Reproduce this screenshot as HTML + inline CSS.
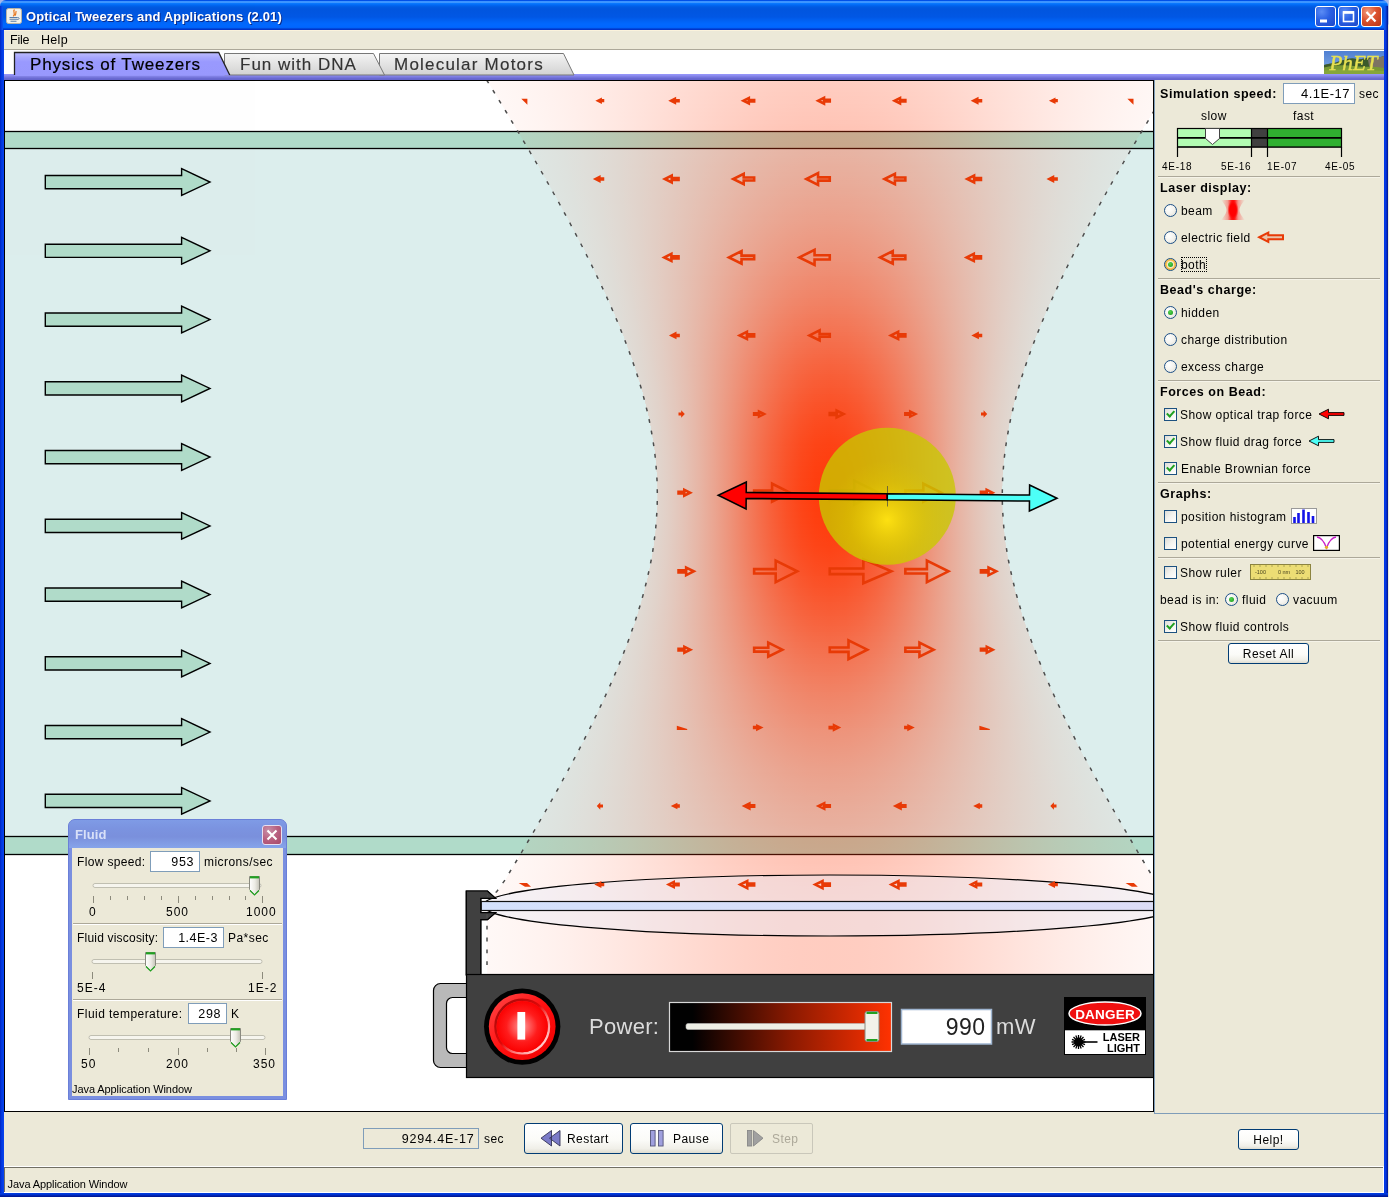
<!DOCTYPE html>
<html><head><meta charset="utf-8"><title>Optical Tweezers and Applications (2.01)</title>
<style>
html,body{margin:0;padding:0;}
body{width:1389px;height:1197px;overflow:hidden;background:#ece9d8;font-family:"Liberation Sans",sans-serif;font-size:12px;color:#000;position:relative;}
.abs{position:absolute;}
.t{position:absolute;white-space:nowrap;line-height:1;}
#frame{position:absolute;left:0;top:0;width:1389px;height:1197px;background:#0831d9;}
#titlebar{position:absolute;left:0;top:0;width:1388px;height:30px;border-radius:6px 6px 0 0;
 background:linear-gradient(to bottom,#0050e8 0px,#0050e8 1px,#3c92ff 1.2px,#3e96ff 2.6px,#0a78ff 3.4px,#0068f4 5px,#005ae2 7px,#0055de 9px,#0057e4 17px,#0062f4 21px,#0068fe 24px,#0066fe 27.4px,#0052e2 28.2px,#0036cc 29.2px,#0032c8 30px);}
#client{position:absolute;left:4px;top:30px;width:1380px;height:1163px;background:#ece9d8;}
#menubar{position:absolute;left:4px;top:30px;width:1380px;height:19px;background:#ece9d8;}
#tabstrip{position:absolute;left:4px;top:50px;width:1380px;height:25px;background:#fff;}
#tabline{position:absolute;left:4px;top:74px;width:1380px;height:6px;background:linear-gradient(to bottom,#9898fc 0%,#8c8cf0 25%,#7a7ae0 50%,#6a6ad2 75%,#6464cc 100%);}
.sep{position:absolute;left:1158px;width:222px;height:1px;background:#aca899;border-bottom:1px solid #f5f3e8;}
.rb{position:absolute;width:11px;height:11px;border-radius:50%;border:1px solid #1c4f87;background:radial-gradient(circle at 35% 35%,#fff 0%,#f4f3ee 50%,#dcdcd2 100%);}
.rb.on::after{content:"";position:absolute;left:3px;top:3px;width:5px;height:5px;border-radius:50%;background:radial-gradient(circle at 40% 35%,#55d551 0%,#21a121 80%);}
.cb{position:absolute;width:11px;height:11px;border:1px solid #1c5180;background:linear-gradient(135deg,#dcdcd7 0%,#f3f3ef 50%,#fff 100%);}
.lbl{position:absolute;white-space:nowrap;font-size:12px;line-height:14px;letter-spacing:0.45px;margin-top:1px;}
.hdr{position:absolute;white-space:nowrap;font-size:12.5px;font-weight:bold;line-height:14px;letter-spacing:0.55px;margin-top:1px;}
.btn{position:absolute;box-sizing:border-box;border:1px solid #003c74;border-radius:3px;background:linear-gradient(to bottom,#fff 0%,#fbfbf8 55%,#f0efe8 85%,#dedcd0 100%);font-size:12px;text-align:center;}
.tf{position:absolute;box-sizing:border-box;border:1px solid #7f9db9;background:#fff;text-align:right;font-size:12px;}
</style></head><body>
<div id="root" style="position:absolute;left:0;top:0;width:1389px;height:1197px;will-change:transform;opacity:0.999">
<div id="frame"></div>
<div class="abs" style="left:1384px;top:0;width:4px;height:1197px;background:linear-gradient(to right,#0038e8 0%,#0638e0 45%,#0024b4 75%,#001488 100%)"></div>
<div class="abs" style="left:0;top:0;width:4px;height:1197px;background:linear-gradient(to right,#0024c0 0%,#0038e0 40%,#0a44f0 100%)"></div>
<div class="abs" style="left:0;top:1193px;width:1388px;height:4px;background:linear-gradient(to bottom,#0040e4 0%,#0034d4 35%,#0020a8 70%,#00148c 100%)"></div>
<div class="abs" style="left:0;top:0;width:8px;height:8px;background:#a2b6ea"></div><div class="abs" style="left:1380px;top:0;width:9px;height:8px;background:#a2b6ea"></div>
<div id="titlebar"></div>
<div id="client"></div>
<div class="abs" style="left:1388px;top:0;width:1px;height:1197px;background:linear-gradient(to bottom,#b4c4ee 0px,#b4c4ee 24px,#ece9d8 25px,#ece9d8 100%)"></div>
<!-- title bar -->
<svg class="abs" style="left:6px;top:8px" width="16" height="16" viewBox="0 0 16 16"><rect x="0.5" y="0.5" width="15" height="15" rx="2" fill="#f4f2ea" stroke="#b9b5a6"/><path d="M8.5,1.5 C6,4 10.5,5 7.2,8.3 M10.3,3.2 C9.2,4.8 10.6,5.6 9,7.6" stroke="#e8761c" stroke-width="1.2" fill="none"/><path d="M3.5,9.5 H11.5 M3.5,11.3 H11.5 M4.5,13.2 H10.5" stroke="#5a7ea8" stroke-width="1.1"/><path d="M11.5,9.5 C13.8,9.3 13.5,11.6 11.3,11.6" stroke="#5a7ea8" stroke-width="1" fill="none"/></svg>
<div class="t" id="ttl" style="left:26px;top:10px;font-size:13px;font-weight:bold;color:#fff;text-shadow:1px 1px 0 #0a2a8a;letter-spacing:0.13px">Optical Tweezers and Applications (2.01)</div>
<div class="abs" style="left:1384px;top:6px;width:4px;height:24px;background:linear-gradient(to right,#0a5cf0 0%,#0848e0 45%,#0028b8 75%,#001488 100%)"></div>
<div class="abs" style="left:0;top:6px;width:3px;height:24px;background:linear-gradient(to right,#0030c8 0%,#0848e8 60%,#0858f0 100%)"></div>
<!-- window buttons -->
<div class="abs wb" style="left:1315px;top:6px;"></div>
<div class="abs wb" style="left:1338px;top:6px;"></div>
<div class="abs wb wc" style="left:1361px;top:6px;"></div>
<svg class="abs" style="left:1315px;top:6px" width="70" height="22" viewBox="0 0 70 22"><rect x="5" y="13.5" width="7" height="3" fill="#fff"/><rect x="28.5" y="6" width="10" height="9.5" fill="none" stroke="#fff" stroke-width="1.6"/><rect x="28" y="5.2" width="11" height="2.6" fill="#fff"/><path d="M51.5,6 L60.5,15.5 M60.5,6 L51.5,15.5" stroke="#fff" stroke-width="2.3" stroke-linecap="butt"/></svg>
<!-- menu -->
<div id="menubar"></div>
<div class="abs" style="left:4px;top:30px;width:1380px;height:1px;background:#fbf3dc"></div>
<div class="abs" style="left:4px;top:49px;width:1380px;height:1px;background:#aca899"></div>
<div class="t" style="left:10px;top:34px;font-size:12.5px;letter-spacing:-0.25px">File</div>
<div class="t" style="left:41px;top:34px;font-size:12.5px;letter-spacing:0.3px">Help</div>
<!-- tabs -->
<div id="tabstrip"></div>
<div id="tabline"></div>
<svg class="abs" style="left:4px;top:50px" width="1380" height="30" viewBox="4 50 1380 30">
<defs><linearGradient id="tg" x1="0" y1="0" x2="0" y2="1"><stop offset="0" stop-color="#f4f4f4"/><stop offset="1" stop-color="#d2d2d2"/></linearGradient>
<linearGradient id="tsel" x1="0" y1="0" x2="0" y2="1"><stop offset="0" stop-color="#bebeff"/><stop offset="0.2" stop-color="#a8a8ff"/><stop offset="0.4" stop-color="#9999ff"/><stop offset="1" stop-color="#9898fe"/></linearGradient></defs>
<path d="M379.5,75 L379.5,53.5 L563.5,53.5 L574,75 Z" fill="url(#tg)" stroke="#777" stroke-width="1"/>
<path d="M224.5,75 L224.5,53.5 L373.5,53.5 L384.5,75 Z" fill="url(#tg)" stroke="#777" stroke-width="1"/>
<path d="M14.5,76 L14.5,52.5 L219,52.5 L230,75.5 Z" fill="url(#tsel)" stroke="none"/>
<path d="M14.5,75 L14.5,52.5 L218.7,52.5 L229.7,75" fill="none" stroke="#222" stroke-width="1.3"/>
</svg>
<div class="t" style="left:30px;top:56px;font-size:17px;letter-spacing:0.86px;-webkit-text-stroke:0.2px #000">Physics of Tweezers</div>
<div class="t" style="left:240px;top:56px;font-size:17px;letter-spacing:1.0px;color:#333;-webkit-text-stroke:0.15px #333">Fun with DNA</div>
<div class="t" style="left:394px;top:56px;font-size:17px;letter-spacing:1.22px;color:#333;-webkit-text-stroke:0.15px #333">Molecular Motors</div>
<!-- PhET logo -->
<svg class="abs" style="left:1324px;top:51px" width="60" height="23" viewBox="0 0 60 23">
<defs><linearGradient id="sky" x1="0" y1="0" x2="0" y2="1"><stop offset="0" stop-color="#4f7fd2"/><stop offset="1" stop-color="#86aee6"/></linearGradient></defs>
<rect width="60" height="23" fill="url(#sky)"/>
<path d="M0,14 C6,12 10,12.500 16,10 C22,8.500 27,6 33,8 C38,9.500 42,5 47,7 C52,8.500 56,6 60,5 V23 H0 Z" fill="#3c5a2a"/>
<path d="M44,9 C48,5 53,8 60,5 V20 H46 Z" fill="#7d7462"/>
<path d="M0,16.500 C10,14 20,13.500 30,15 C40,16.500 50,15 60,17 V23 H0 Z" fill="#7a9a34"/>
<path d="M0,19.500 C15,17.500 35,18.500 60,20 V23 H0 Z" fill="#86a63a"/>
<text x="5.500" y="19.200" font-family="Liberation Serif" font-style="italic" font-size="21.500" fill="#e6e052" stroke="#e6e052" stroke-width="0.45" textLength="48" lengthAdjust="spacingAndGlyphs">PhET</text>
</svg>
<style>
.wb{width:21px;height:21px;box-sizing:border-box;border:1px solid #fff;border-radius:3px;background:radial-gradient(circle at 30% 25%,#5b8cf5 0%,#2a5fe3 45%,#1c46c8 100%);}
.wb.wc{background:radial-gradient(circle at 30% 25%,#f09a7c 0%,#dc5230 45%,#b93414 100%);}
</style>
<svg class="abs" style="left:4px;top:80px" width="1150" height="1032" viewBox="4 80 1150 1032">
<defs>
<linearGradient id="gb" x1="0" y1="0" x2="1" y2="0"><stop offset="0.0000" stop-color="#ff3b0b" stop-opacity="0.1353"/><stop offset="0.0417" stop-color="#ff3b0b" stop-opacity="0.1863"/><stop offset="0.0833" stop-color="#ff3b0b" stop-opacity="0.2494"/><stop offset="0.1250" stop-color="#ff3b0b" stop-opacity="0.3247"/><stop offset="0.1667" stop-color="#ff3b0b" stop-opacity="0.4111"/><stop offset="0.2083" stop-color="#ff3b0b" stop-opacity="0.5063"/><stop offset="0.2500" stop-color="#ff3b0b" stop-opacity="0.6065"/><stop offset="0.2917" stop-color="#ff3b0b" stop-opacity="0.7066"/><stop offset="0.3333" stop-color="#ff3b0b" stop-opacity="0.8007"/><stop offset="0.3750" stop-color="#ff3b0b" stop-opacity="0.8825"/><stop offset="0.4167" stop-color="#ff3b0b" stop-opacity="0.9460"/><stop offset="0.4583" stop-color="#ff3b0b" stop-opacity="0.9862"/><stop offset="0.5000" stop-color="#ff3b0b" stop-opacity="1.0000"/><stop offset="0.5417" stop-color="#ff3b0b" stop-opacity="0.9862"/><stop offset="0.5833" stop-color="#ff3b0b" stop-opacity="0.9460"/><stop offset="0.6250" stop-color="#ff3b0b" stop-opacity="0.8825"/><stop offset="0.6667" stop-color="#ff3b0b" stop-opacity="0.8007"/><stop offset="0.7083" stop-color="#ff3b0b" stop-opacity="0.7066"/><stop offset="0.7500" stop-color="#ff3b0b" stop-opacity="0.6065"/><stop offset="0.7917" stop-color="#ff3b0b" stop-opacity="0.5063"/><stop offset="0.8333" stop-color="#ff3b0b" stop-opacity="0.4111"/><stop offset="0.8750" stop-color="#ff3b0b" stop-opacity="0.3247"/><stop offset="0.9167" stop-color="#ff3b0b" stop-opacity="0.2494"/><stop offset="0.9583" stop-color="#ff3b0b" stop-opacity="0.1863"/><stop offset="1.0000" stop-color="#ff3b0b" stop-opacity="0.1353"/></linearGradient>
<clipPath id="beamclip"><path d="M486.6,80.0 L489.1,84.0 L491.6,88.0 L494.0,92.0 L496.5,96.0 L498.9,100.0 L501.3,104.0 L503.8,108.0 L506.2,112.0 L508.6,116.0 L511.0,120.0 L513.4,124.0 L515.8,128.0 L518.2,132.0 L520.6,136.0 L522.9,140.0 L525.3,144.0 L527.7,148.0 L530.0,152.0 L532.3,156.0 L534.7,160.0 L537.0,164.0 L539.3,168.0 L541.6,172.0 L543.9,176.0 L546.1,180.0 L548.4,184.0 L550.7,188.0 L552.9,192.0 L555.1,196.0 L557.3,200.0 L559.6,204.0 L561.7,208.0 L563.9,212.0 L566.1,216.0 L568.3,220.0 L570.4,224.0 L572.5,228.0 L574.6,232.0 L576.7,236.0 L578.8,240.0 L580.9,244.0 L583.0,248.0 L585.0,252.0 L587.0,256.0 L589.0,260.0 L591.0,264.0 L593.0,268.0 L594.9,272.0 L596.8,276.0 L598.8,280.0 L600.7,284.0 L602.5,288.0 L604.4,292.0 L606.2,296.0 L608.0,300.0 L609.8,304.0 L611.6,308.0 L613.3,312.0 L615.0,316.0 L616.7,320.0 L618.4,324.0 L620.0,328.0 L621.6,332.0 L623.2,336.0 L624.8,340.0 L626.3,344.0 L627.8,348.0 L629.3,352.0 L630.7,356.0 L632.1,360.0 L633.5,364.0 L634.9,368.0 L636.2,372.0 L637.5,376.0 L638.7,380.0 L639.9,384.0 L641.1,388.0 L642.2,392.0 L643.3,396.0 L644.4,400.0 L645.4,404.0 L646.4,408.0 L647.4,412.0 L648.3,416.0 L649.2,420.0 L650.0,424.0 L650.8,428.0 L651.5,432.0 L652.2,436.0 L652.9,440.0 L653.5,444.0 L654.1,448.0 L654.6,452.0 L655.1,456.0 L655.5,460.0 L655.9,464.0 L656.2,468.0 L656.5,472.0 L656.8,476.0 L657.0,480.0 L657.1,484.0 L657.2,488.0 L657.3,492.0 L657.3,496.0 L657.3,500.0 L657.2,504.0 L657.0,508.0 L656.9,512.0 L656.6,516.0 L656.4,520.0 L656.1,524.0 L655.7,528.0 L655.3,532.0 L654.8,536.0 L654.3,540.0 L653.8,544.0 L653.2,548.0 L652.6,552.0 L651.9,556.0 L651.2,560.0 L650.4,564.0 L649.6,568.0 L648.7,572.0 L647.8,576.0 L646.9,580.0 L645.9,584.0 L644.9,588.0 L643.9,592.0 L642.8,596.0 L641.7,600.0 L640.5,604.0 L639.3,608.0 L638.1,612.0 L636.8,616.0 L635.5,620.0 L634.2,624.0 L632.8,628.0 L631.4,632.0 L630.0,636.0 L628.6,640.0 L627.1,644.0 L625.5,648.0 L624.0,652.0 L622.4,656.0 L620.8,660.0 L619.2,664.0 L617.5,668.0 L615.9,672.0 L614.2,676.0 L612.4,680.0 L610.7,684.0 L608.9,688.0 L607.1,692.0 L605.3,696.0 L603.5,700.0 L601.6,704.0 L599.7,708.0 L597.8,712.0 L595.9,716.0 L593.9,720.0 L592.0,724.0 L590.0,728.0 L588.0,732.0 L586.0,736.0 L584.0,740.0 L581.9,744.0 L579.9,748.0 L577.8,752.0 L575.7,756.0 L573.6,760.0 L571.5,764.0 L569.3,768.0 L567.2,772.0 L565.0,776.0 L562.8,780.0 L560.7,784.0 L558.5,788.0 L556.2,792.0 L554.0,796.0 L551.8,800.0 L549.5,804.0 L547.3,808.0 L545.0,812.0 L542.7,816.0 L540.4,820.0 L538.1,824.0 L535.8,828.0 L533.5,832.0 L531.2,836.0 L528.8,840.0 L526.5,844.0 L524.1,848.0 L521.8,852.0 L519.4,856.0 L517.0,860.0 L514.6,864.0 L512.2,868.0 L509.8,872.0 L507.4,876.0 L505.0,880.0 L502.1,884.0 L499.3,888.0 L496.5,892.0 L493.6,896.0 L490.7,900.0 L487.9,904.0 L486.8,908.0 L486.8,912.0 L486.8,916.0 L486.8,920.0 L486.8,924.0 L486.8,928.0 L486.8,932.0 L486.8,936.0 L486.8,940.0 L486.8,944.0 L486.8,948.0 L486.8,952.0 L486.8,956.0 L486.8,960.0 L486.8,964.0 L486.8,968.0 L486.8,972.0 L486.8,974.0 L1172.8,974.0 L1172.8,972.0 L1172.8,968.0 L1172.8,964.0 L1172.8,960.0 L1172.8,956.0 L1172.8,952.0 L1172.8,948.0 L1172.8,944.0 L1172.8,940.0 L1172.8,936.0 L1172.8,932.0 L1172.8,928.0 L1172.8,924.0 L1172.8,920.0 L1172.8,916.0 L1172.8,912.0 L1172.8,908.0 L1171.7,904.0 L1168.9,900.0 L1166.0,896.0 L1163.1,892.0 L1160.3,888.0 L1157.5,884.0 L1154.6,880.0 L1152.2,876.0 L1149.8,872.0 L1147.4,868.0 L1145.0,864.0 L1142.6,860.0 L1140.2,856.0 L1137.8,852.0 L1135.5,848.0 L1133.1,844.0 L1130.8,840.0 L1128.4,836.0 L1126.1,832.0 L1123.8,828.0 L1121.5,824.0 L1119.2,820.0 L1116.9,816.0 L1114.6,812.0 L1112.3,808.0 L1110.1,804.0 L1107.8,800.0 L1105.6,796.0 L1103.4,792.0 L1101.1,788.0 L1098.9,784.0 L1096.8,780.0 L1094.6,776.0 L1092.4,772.0 L1090.3,768.0 L1088.1,764.0 L1086.0,760.0 L1083.9,756.0 L1081.8,752.0 L1079.7,748.0 L1077.7,744.0 L1075.6,740.0 L1073.6,736.0 L1071.6,732.0 L1069.6,728.0 L1067.6,724.0 L1065.7,720.0 L1063.7,716.0 L1061.8,712.0 L1059.9,708.0 L1058.0,704.0 L1056.1,700.0 L1054.3,696.0 L1052.5,692.0 L1050.7,688.0 L1048.9,684.0 L1047.2,680.0 L1045.4,676.0 L1043.7,672.0 L1042.1,668.0 L1040.4,664.0 L1038.8,660.0 L1037.2,656.0 L1035.6,652.0 L1034.1,648.0 L1032.5,644.0 L1031.0,640.0 L1029.6,636.0 L1028.2,632.0 L1026.8,628.0 L1025.4,624.0 L1024.1,620.0 L1022.8,616.0 L1021.5,612.0 L1020.3,608.0 L1019.1,604.0 L1017.9,600.0 L1016.8,596.0 L1015.7,592.0 L1014.7,588.0 L1013.7,584.0 L1012.7,580.0 L1011.8,576.0 L1010.9,572.0 L1010.0,568.0 L1009.2,564.0 L1008.4,560.0 L1007.7,556.0 L1007.0,552.0 L1006.4,548.0 L1005.8,544.0 L1005.3,540.0 L1004.8,536.0 L1004.3,532.0 L1003.9,528.0 L1003.5,524.0 L1003.2,520.0 L1003.0,516.0 L1002.7,512.0 L1002.6,508.0 L1002.4,504.0 L1002.3,500.0 L1002.3,496.0 L1002.3,492.0 L1002.4,488.0 L1002.5,484.0 L1002.6,480.0 L1002.8,476.0 L1003.1,472.0 L1003.4,468.0 L1003.7,464.0 L1004.1,460.0 L1004.5,456.0 L1005.0,452.0 L1005.5,448.0 L1006.1,444.0 L1006.7,440.0 L1007.4,436.0 L1008.1,432.0 L1008.8,428.0 L1009.6,424.0 L1010.4,420.0 L1011.3,416.0 L1012.2,412.0 L1013.2,408.0 L1014.2,404.0 L1015.2,400.0 L1016.3,396.0 L1017.4,392.0 L1018.5,388.0 L1019.7,384.0 L1020.9,380.0 L1022.1,376.0 L1023.4,372.0 L1024.7,368.0 L1026.1,364.0 L1027.5,360.0 L1028.9,356.0 L1030.3,352.0 L1031.8,348.0 L1033.3,344.0 L1034.8,340.0 L1036.4,336.0 L1038.0,332.0 L1039.6,328.0 L1041.2,324.0 L1042.9,320.0 L1044.6,316.0 L1046.3,312.0 L1048.0,308.0 L1049.8,304.0 L1051.6,300.0 L1053.4,296.0 L1055.2,292.0 L1057.1,288.0 L1058.9,284.0 L1060.8,280.0 L1062.8,276.0 L1064.7,272.0 L1066.6,268.0 L1068.6,264.0 L1070.6,260.0 L1072.6,256.0 L1074.6,252.0 L1076.6,248.0 L1078.7,244.0 L1080.8,240.0 L1082.9,236.0 L1085.0,232.0 L1087.1,228.0 L1089.2,224.0 L1091.3,220.0 L1093.5,216.0 L1095.7,212.0 L1097.9,208.0 L1100.0,204.0 L1102.3,200.0 L1104.5,196.0 L1106.7,192.0 L1108.9,188.0 L1111.2,184.0 L1113.5,180.0 L1115.7,176.0 L1118.0,172.0 L1120.3,168.0 L1122.6,164.0 L1124.9,160.0 L1127.3,156.0 L1129.6,152.0 L1131.9,148.0 L1134.3,144.0 L1136.7,140.0 L1139.0,136.0 L1141.4,132.0 L1143.8,128.0 L1146.2,124.0 L1148.6,120.0 L1151.0,116.0 L1153.4,112.0 L1155.8,108.0 L1158.3,104.0 L1160.7,100.0 L1163.1,96.0 L1165.6,92.0 L1168.0,88.0 L1170.5,84.0 L1173.0,80.0Z"/></clipPath>
<clipPath id="cv"><rect x="5" y="81" width="1148" height="1030"/></clipPath>
<radialGradient id="beadhl" cx="887.3" cy="520" r="60" gradientUnits="userSpaceOnUse"><stop offset="0" stop-color="#ffe312" stop-opacity="0.95"/><stop offset="0.3" stop-color="#f6da0c" stop-opacity="0.6"/><stop offset="0.65" stop-color="#ead400" stop-opacity="0.22"/><stop offset="1" stop-color="#e0d000" stop-opacity="0"/></radialGradient>
<radialGradient id="btn" cx="521.5" cy="1026.8" r="34" gradientUnits="userSpaceOnUse"><stop offset="0" stop-color="#ff6a6a"/><stop offset="0.45" stop-color="#ff1010"/><stop offset="0.74" stop-color="#f00000"/><stop offset="0.80" stop-color="#ff5050"/><stop offset="0.86" stop-color="#e80000"/><stop offset="1" stop-color="#d00000"/></radialGradient>
<linearGradient id="pw" x1="0" y1="0" x2="1" y2="0"><stop offset="0" stop-color="#000"/><stop offset="0.1" stop-color="#000"/><stop offset="0.55" stop-color="#8c1a00"/><stop offset="1" stop-color="#ff3200"/></linearGradient>
<linearGradient id="lensg" x1="0" y1="0" x2="1" y2="0"><stop offset="0" stop-color="#c9d9fb"/><stop offset="1" stop-color="#d4d4f4"/></linearGradient>
</defs>
<rect x="4" y="80" width="1150" height="1032" fill="#000"/>
<rect x="5" y="81" width="1148" height="1030" fill="#fff"/>
<g clip-path="url(#cv)">
<rect x="5" y="148" width="1148" height="689" fill="#dceeed"/>
<rect x="3.5" y="131.5" width="1152" height="17" fill="#b0dbc9" stroke="#000" stroke-width="1.3"/>
<rect x="3.5" y="836.5" width="1152" height="18" fill="#b0dbc9" stroke="#000" stroke-width="1.3"/>
<path d="M45.3,175.5 H181.6 V168.7 L210.0,182.1 L181.6,195.5 V188.7 H45.3Z" fill="#b0dbc9" stroke="#000" stroke-width="1.4" stroke-linejoin="miter"/>
<path d="M45.3,244.2 H181.6 V237.4 L210.0,250.8 L181.6,264.2 V257.4 H45.3Z" fill="#b0dbc9" stroke="#000" stroke-width="1.4" stroke-linejoin="miter"/>
<path d="M45.3,313.0 H181.6 V306.2 L210.0,319.6 L181.6,333.0 V326.2 H45.3Z" fill="#b0dbc9" stroke="#000" stroke-width="1.4" stroke-linejoin="miter"/>
<path d="M45.3,381.8 H181.6 V375.0 L210.0,388.4 L181.6,401.8 V395.0 H45.3Z" fill="#b0dbc9" stroke="#000" stroke-width="1.4" stroke-linejoin="miter"/>
<path d="M45.3,450.5 H181.6 V443.7 L210.0,457.1 L181.6,470.5 V463.7 H45.3Z" fill="#b0dbc9" stroke="#000" stroke-width="1.4" stroke-linejoin="miter"/>
<path d="M45.3,519.2 H181.6 V512.5 L210.0,525.9 L181.6,539.2 V532.5 H45.3Z" fill="#b0dbc9" stroke="#000" stroke-width="1.4" stroke-linejoin="miter"/>
<path d="M45.3,588.0 H181.6 V581.2 L210.0,594.6 L181.6,608.0 V601.2 H45.3Z" fill="#b0dbc9" stroke="#000" stroke-width="1.4" stroke-linejoin="miter"/>
<path d="M45.3,656.8 H181.6 V650.0 L210.0,663.4 L181.6,676.8 V670.0 H45.3Z" fill="#b0dbc9" stroke="#000" stroke-width="1.4" stroke-linejoin="miter"/>
<path d="M45.3,725.5 H181.6 V718.7 L210.0,732.1 L181.6,745.5 V738.7 H45.3Z" fill="#b0dbc9" stroke="#000" stroke-width="1.4" stroke-linejoin="miter"/>
<path d="M45.3,794.2 H181.6 V787.5 L210.0,800.9 L181.6,814.2 V807.5 H45.3Z" fill="#b0dbc9" stroke="#000" stroke-width="1.4" stroke-linejoin="miter"/>
<rect x="433.5" y="983.5" width="60" height="84" rx="7" ry="7" fill="#b9b9b9" stroke="#000" stroke-width="1.2"/>
<rect x="446.5" y="997.5" width="40" height="56" rx="6" ry="6" fill="#fff" stroke="#000" stroke-width="1.2"/>
<path d="M466.3,891 L487.5,891 L495.6,898.3 L480.8,898.3 L480.8,912.6 L495.6,912.6 L487.5,919.6 L480.8,919.6 L480.8,975 L466.3,975 Z" fill="#404040" stroke="#000" stroke-width="1.2"/>
<g clip-path="url(#beamclip)" shape-rendering="crispEdges">
<rect x="487.2" y="80" width="685.1" height="2" fill="url(#gb)" fill-opacity="0.254"/>
<rect x="488.5" y="82" width="682.7" height="2" fill="url(#gb)" fill-opacity="0.255"/>
<rect x="489.7" y="84" width="680.2" height="2" fill="url(#gb)" fill-opacity="0.257"/>
<rect x="490.9" y="86" width="677.7" height="2" fill="url(#gb)" fill-opacity="0.259"/>
<rect x="492.2" y="88" width="675.3" height="2" fill="url(#gb)" fill-opacity="0.261"/>
<rect x="493.4" y="90" width="672.8" height="2" fill="url(#gb)" fill-opacity="0.263"/>
<rect x="494.6" y="92" width="670.4" height="2" fill="url(#gb)" fill-opacity="0.265"/>
<rect x="495.8" y="94" width="667.9" height="2" fill="url(#gb)" fill-opacity="0.267"/>
<rect x="497.1" y="96" width="665.5" height="2" fill="url(#gb)" fill-opacity="0.269"/>
<rect x="498.3" y="98" width="663.0" height="2" fill="url(#gb)" fill-opacity="0.271"/>
<rect x="499.5" y="100" width="660.6" height="2" fill="url(#gb)" fill-opacity="0.273"/>
<rect x="500.7" y="102" width="658.1" height="2" fill="url(#gb)" fill-opacity="0.275"/>
<rect x="501.9" y="104" width="655.7" height="2" fill="url(#gb)" fill-opacity="0.277"/>
<rect x="503.2" y="106" width="653.3" height="2" fill="url(#gb)" fill-opacity="0.279"/>
<rect x="504.4" y="108" width="650.8" height="2" fill="url(#gb)" fill-opacity="0.281"/>
<rect x="505.6" y="110" width="648.4" height="2" fill="url(#gb)" fill-opacity="0.283"/>
<rect x="506.8" y="112" width="646.0" height="2" fill="url(#gb)" fill-opacity="0.285"/>
<rect x="508.0" y="114" width="643.6" height="2" fill="url(#gb)" fill-opacity="0.287"/>
<rect x="509.2" y="116" width="641.2" height="2" fill="url(#gb)" fill-opacity="0.290"/>
<rect x="510.4" y="118" width="638.8" height="2" fill="url(#gb)" fill-opacity="0.292"/>
<rect x="511.6" y="120" width="636.4" height="2" fill="url(#gb)" fill-opacity="0.294"/>
<rect x="512.8" y="122" width="634.0" height="2" fill="url(#gb)" fill-opacity="0.296"/>
<rect x="514.0" y="124" width="631.6" height="2" fill="url(#gb)" fill-opacity="0.298"/>
<rect x="515.2" y="126" width="629.2" height="2" fill="url(#gb)" fill-opacity="0.301"/>
<rect x="516.4" y="128" width="626.8" height="2" fill="url(#gb)" fill-opacity="0.303"/>
<rect x="517.6" y="130" width="624.4" height="2" fill="url(#gb)" fill-opacity="0.305"/>
<rect x="518.8" y="132" width="622.0" height="2" fill="url(#gb)" fill-opacity="0.308"/>
<rect x="520.0" y="134" width="619.6" height="2" fill="url(#gb)" fill-opacity="0.310"/>
<rect x="521.2" y="136" width="617.3" height="2" fill="url(#gb)" fill-opacity="0.312"/>
<rect x="522.4" y="138" width="614.9" height="2" fill="url(#gb)" fill-opacity="0.315"/>
<rect x="523.5" y="140" width="612.5" height="2" fill="url(#gb)" fill-opacity="0.317"/>
<rect x="524.7" y="142" width="610.2" height="2" fill="url(#gb)" fill-opacity="0.320"/>
<rect x="525.9" y="144" width="607.8" height="2" fill="url(#gb)" fill-opacity="0.322"/>
<rect x="527.1" y="146" width="605.5" height="2" fill="url(#gb)" fill-opacity="0.325"/>
<rect x="528.2" y="148" width="603.1" height="2" fill="url(#gb)" fill-opacity="0.327"/>
<rect x="529.4" y="150" width="600.8" height="2" fill="url(#gb)" fill-opacity="0.330"/>
<rect x="530.6" y="152" width="598.4" height="2" fill="url(#gb)" fill-opacity="0.332"/>
<rect x="531.8" y="154" width="596.1" height="2" fill="url(#gb)" fill-opacity="0.335"/>
<rect x="532.9" y="156" width="593.8" height="2" fill="url(#gb)" fill-opacity="0.338"/>
<rect x="534.1" y="158" width="591.4" height="2" fill="url(#gb)" fill-opacity="0.340"/>
<rect x="535.2" y="160" width="589.1" height="2" fill="url(#gb)" fill-opacity="0.343"/>
<rect x="536.4" y="162" width="586.8" height="2" fill="url(#gb)" fill-opacity="0.346"/>
<rect x="537.6" y="164" width="584.5" height="2" fill="url(#gb)" fill-opacity="0.348"/>
<rect x="538.7" y="166" width="582.2" height="2" fill="url(#gb)" fill-opacity="0.351"/>
<rect x="539.9" y="168" width="579.9" height="2" fill="url(#gb)" fill-opacity="0.354"/>
<rect x="541.0" y="170" width="577.6" height="2" fill="url(#gb)" fill-opacity="0.357"/>
<rect x="542.1" y="172" width="575.3" height="2" fill="url(#gb)" fill-opacity="0.360"/>
<rect x="543.3" y="174" width="573.0" height="2" fill="url(#gb)" fill-opacity="0.362"/>
<rect x="544.4" y="176" width="570.7" height="2" fill="url(#gb)" fill-opacity="0.365"/>
<rect x="545.6" y="178" width="568.5" height="2" fill="url(#gb)" fill-opacity="0.368"/>
<rect x="546.7" y="180" width="566.2" height="2" fill="url(#gb)" fill-opacity="0.371"/>
<rect x="547.8" y="182" width="563.9" height="2" fill="url(#gb)" fill-opacity="0.374"/>
<rect x="549.0" y="184" width="561.7" height="2" fill="url(#gb)" fill-opacity="0.377"/>
<rect x="550.1" y="186" width="559.4" height="2" fill="url(#gb)" fill-opacity="0.380"/>
<rect x="551.2" y="188" width="557.2" height="2" fill="url(#gb)" fill-opacity="0.383"/>
<rect x="552.3" y="190" width="554.9" height="2" fill="url(#gb)" fill-opacity="0.387"/>
<rect x="553.5" y="192" width="552.7" height="2" fill="url(#gb)" fill-opacity="0.390"/>
<rect x="554.6" y="194" width="550.5" height="2" fill="url(#gb)" fill-opacity="0.393"/>
<rect x="555.7" y="196" width="548.2" height="2" fill="url(#gb)" fill-opacity="0.396"/>
<rect x="556.8" y="198" width="546.0" height="2" fill="url(#gb)" fill-opacity="0.399"/>
<rect x="557.9" y="200" width="543.8" height="2" fill="url(#gb)" fill-opacity="0.402"/>
<rect x="559.0" y="202" width="541.6" height="2" fill="url(#gb)" fill-opacity="0.406"/>
<rect x="560.1" y="204" width="539.4" height="2" fill="url(#gb)" fill-opacity="0.409"/>
<rect x="561.2" y="206" width="537.2" height="2" fill="url(#gb)" fill-opacity="0.412"/>
<rect x="562.3" y="208" width="535.0" height="2" fill="url(#gb)" fill-opacity="0.416"/>
<rect x="563.4" y="210" width="532.8" height="2" fill="url(#gb)" fill-opacity="0.419"/>
<rect x="564.5" y="212" width="530.6" height="2" fill="url(#gb)" fill-opacity="0.423"/>
<rect x="565.6" y="214" width="528.5" height="2" fill="url(#gb)" fill-opacity="0.426"/>
<rect x="566.6" y="216" width="526.3" height="2" fill="url(#gb)" fill-opacity="0.430"/>
<rect x="567.7" y="218" width="524.2" height="2" fill="url(#gb)" fill-opacity="0.433"/>
<rect x="568.8" y="220" width="522.0" height="2" fill="url(#gb)" fill-opacity="0.437"/>
<rect x="569.9" y="222" width="519.9" height="2" fill="url(#gb)" fill-opacity="0.440"/>
<rect x="570.9" y="224" width="517.7" height="2" fill="url(#gb)" fill-opacity="0.444"/>
<rect x="572.0" y="226" width="515.6" height="2" fill="url(#gb)" fill-opacity="0.448"/>
<rect x="573.1" y="228" width="513.5" height="2" fill="url(#gb)" fill-opacity="0.451"/>
<rect x="574.1" y="230" width="511.4" height="2" fill="url(#gb)" fill-opacity="0.455"/>
<rect x="575.2" y="232" width="509.3" height="2" fill="url(#gb)" fill-opacity="0.459"/>
<rect x="576.2" y="234" width="507.2" height="2" fill="url(#gb)" fill-opacity="0.463"/>
<rect x="577.3" y="236" width="505.1" height="2" fill="url(#gb)" fill-opacity="0.467"/>
<rect x="578.3" y="238" width="503.0" height="2" fill="url(#gb)" fill-opacity="0.470"/>
<rect x="579.3" y="240" width="500.9" height="2" fill="url(#gb)" fill-opacity="0.474"/>
<rect x="580.4" y="242" width="498.8" height="2" fill="url(#gb)" fill-opacity="0.478"/>
<rect x="581.4" y="244" width="496.8" height="2" fill="url(#gb)" fill-opacity="0.482"/>
<rect x="582.4" y="246" width="494.7" height="2" fill="url(#gb)" fill-opacity="0.486"/>
<rect x="583.5" y="248" width="492.7" height="2" fill="url(#gb)" fill-opacity="0.490"/>
<rect x="584.5" y="250" width="490.6" height="2" fill="url(#gb)" fill-opacity="0.494"/>
<rect x="585.5" y="252" width="488.6" height="2" fill="url(#gb)" fill-opacity="0.499"/>
<rect x="586.5" y="254" width="486.6" height="2" fill="url(#gb)" fill-opacity="0.503"/>
<rect x="587.5" y="256" width="484.6" height="2" fill="url(#gb)" fill-opacity="0.507"/>
<rect x="588.5" y="258" width="482.6" height="2" fill="url(#gb)" fill-opacity="0.511"/>
<rect x="589.5" y="260" width="480.6" height="2" fill="url(#gb)" fill-opacity="0.515"/>
<rect x="590.5" y="262" width="478.6" height="2" fill="url(#gb)" fill-opacity="0.520"/>
<rect x="591.5" y="264" width="476.6" height="2" fill="url(#gb)" fill-opacity="0.524"/>
<rect x="592.5" y="266" width="474.6" height="2" fill="url(#gb)" fill-opacity="0.528"/>
<rect x="593.5" y="268" width="472.7" height="2" fill="url(#gb)" fill-opacity="0.533"/>
<rect x="594.4" y="270" width="470.7" height="2" fill="url(#gb)" fill-opacity="0.537"/>
<rect x="595.4" y="272" width="468.8" height="2" fill="url(#gb)" fill-opacity="0.542"/>
<rect x="596.4" y="274" width="466.9" height="2" fill="url(#gb)" fill-opacity="0.546"/>
<rect x="597.3" y="276" width="464.9" height="2" fill="url(#gb)" fill-opacity="0.551"/>
<rect x="598.3" y="278" width="463.0" height="2" fill="url(#gb)" fill-opacity="0.555"/>
<rect x="599.2" y="280" width="461.1" height="2" fill="url(#gb)" fill-opacity="0.560"/>
<rect x="600.2" y="282" width="459.2" height="2" fill="url(#gb)" fill-opacity="0.564"/>
<rect x="601.1" y="284" width="457.4" height="2" fill="url(#gb)" fill-opacity="0.569"/>
<rect x="602.1" y="286" width="455.5" height="2" fill="url(#gb)" fill-opacity="0.574"/>
<rect x="603.0" y="288" width="453.6" height="2" fill="url(#gb)" fill-opacity="0.578"/>
<rect x="603.9" y="290" width="451.8" height="2" fill="url(#gb)" fill-opacity="0.583"/>
<rect x="604.8" y="292" width="449.9" height="2" fill="url(#gb)" fill-opacity="0.588"/>
<rect x="605.8" y="294" width="448.1" height="2" fill="url(#gb)" fill-opacity="0.593"/>
<rect x="606.7" y="296" width="446.3" height="2" fill="url(#gb)" fill-opacity="0.598"/>
<rect x="607.6" y="298" width="444.5" height="2" fill="url(#gb)" fill-opacity="0.602"/>
<rect x="608.5" y="300" width="442.7" height="2" fill="url(#gb)" fill-opacity="0.607"/>
<rect x="609.4" y="302" width="440.9" height="2" fill="url(#gb)" fill-opacity="0.612"/>
<rect x="610.2" y="304" width="439.1" height="2" fill="url(#gb)" fill-opacity="0.617"/>
<rect x="611.1" y="306" width="437.4" height="2" fill="url(#gb)" fill-opacity="0.622"/>
<rect x="612.0" y="308" width="435.6" height="2" fill="url(#gb)" fill-opacity="0.627"/>
<rect x="612.9" y="310" width="433.9" height="2" fill="url(#gb)" fill-opacity="0.632"/>
<rect x="613.7" y="312" width="432.1" height="2" fill="url(#gb)" fill-opacity="0.637"/>
<rect x="614.6" y="314" width="430.4" height="2" fill="url(#gb)" fill-opacity="0.642"/>
<rect x="615.4" y="316" width="428.7" height="2" fill="url(#gb)" fill-opacity="0.648"/>
<rect x="616.3" y="318" width="427.0" height="2" fill="url(#gb)" fill-opacity="0.653"/>
<rect x="617.1" y="320" width="425.3" height="2" fill="url(#gb)" fill-opacity="0.658"/>
<rect x="618.0" y="322" width="423.7" height="2" fill="url(#gb)" fill-opacity="0.663"/>
<rect x="618.8" y="324" width="422.0" height="2" fill="url(#gb)" fill-opacity="0.668"/>
<rect x="619.6" y="326" width="420.4" height="2" fill="url(#gb)" fill-opacity="0.674"/>
<rect x="620.4" y="328" width="418.8" height="2" fill="url(#gb)" fill-opacity="0.679"/>
<rect x="621.2" y="330" width="417.1" height="2" fill="url(#gb)" fill-opacity="0.684"/>
<rect x="622.0" y="332" width="415.5" height="2" fill="url(#gb)" fill-opacity="0.689"/>
<rect x="622.8" y="334" width="414.0" height="2" fill="url(#gb)" fill-opacity="0.695"/>
<rect x="623.6" y="336" width="412.4" height="2" fill="url(#gb)" fill-opacity="0.700"/>
<rect x="624.4" y="338" width="410.8" height="2" fill="url(#gb)" fill-opacity="0.705"/>
<rect x="625.2" y="340" width="409.3" height="2" fill="url(#gb)" fill-opacity="0.711"/>
<rect x="625.9" y="342" width="407.7" height="2" fill="url(#gb)" fill-opacity="0.716"/>
<rect x="626.7" y="344" width="406.2" height="2" fill="url(#gb)" fill-opacity="0.721"/>
<rect x="627.4" y="346" width="404.7" height="2" fill="url(#gb)" fill-opacity="0.727"/>
<rect x="628.2" y="348" width="403.2" height="2" fill="url(#gb)" fill-opacity="0.732"/>
<rect x="628.9" y="350" width="401.8" height="2" fill="url(#gb)" fill-opacity="0.737"/>
<rect x="629.6" y="352" width="400.3" height="2" fill="url(#gb)" fill-opacity="0.743"/>
<rect x="630.4" y="354" width="398.9" height="2" fill="url(#gb)" fill-opacity="0.748"/>
<rect x="631.1" y="356" width="397.4" height="2" fill="url(#gb)" fill-opacity="0.754"/>
<rect x="631.8" y="358" width="396.0" height="2" fill="url(#gb)" fill-opacity="0.759"/>
<rect x="632.5" y="360" width="394.6" height="2" fill="url(#gb)" fill-opacity="0.764"/>
<rect x="633.2" y="362" width="393.2" height="2" fill="url(#gb)" fill-opacity="0.770"/>
<rect x="633.9" y="364" width="391.9" height="2" fill="url(#gb)" fill-opacity="0.775"/>
<rect x="634.5" y="366" width="390.5" height="2" fill="url(#gb)" fill-opacity="0.780"/>
<rect x="635.2" y="368" width="389.2" height="2" fill="url(#gb)" fill-opacity="0.786"/>
<rect x="635.9" y="370" width="387.9" height="2" fill="url(#gb)" fill-opacity="0.791"/>
<rect x="636.5" y="372" width="386.6" height="2" fill="url(#gb)" fill-opacity="0.796"/>
<rect x="637.1" y="374" width="385.3" height="2" fill="url(#gb)" fill-opacity="0.802"/>
<rect x="637.8" y="376" width="384.0" height="2" fill="url(#gb)" fill-opacity="0.807"/>
<rect x="638.4" y="378" width="382.8" height="2" fill="url(#gb)" fill-opacity="0.812"/>
<rect x="639.0" y="380" width="381.6" height="2" fill="url(#gb)" fill-opacity="0.818"/>
<rect x="639.6" y="382" width="380.4" height="2" fill="url(#gb)" fill-opacity="0.823"/>
<rect x="640.2" y="384" width="379.2" height="2" fill="url(#gb)" fill-opacity="0.828"/>
<rect x="640.8" y="386" width="378.0" height="2" fill="url(#gb)" fill-opacity="0.833"/>
<rect x="641.4" y="388" width="376.8" height="2" fill="url(#gb)" fill-opacity="0.838"/>
<rect x="642.0" y="390" width="375.7" height="2" fill="url(#gb)" fill-opacity="0.843"/>
<rect x="642.5" y="392" width="374.6" height="2" fill="url(#gb)" fill-opacity="0.848"/>
<rect x="643.1" y="394" width="373.5" height="2" fill="url(#gb)" fill-opacity="0.853"/>
<rect x="643.6" y="396" width="372.4" height="2" fill="url(#gb)" fill-opacity="0.858"/>
<rect x="644.1" y="398" width="371.3" height="2" fill="url(#gb)" fill-opacity="0.863"/>
<rect x="644.7" y="400" width="370.3" height="2" fill="url(#gb)" fill-opacity="0.868"/>
<rect x="645.2" y="402" width="369.2" height="2" fill="url(#gb)" fill-opacity="0.873"/>
<rect x="645.7" y="404" width="368.2" height="2" fill="url(#gb)" fill-opacity="0.878"/>
<rect x="646.2" y="406" width="367.2" height="2" fill="url(#gb)" fill-opacity="0.883"/>
<rect x="646.7" y="408" width="366.3" height="2" fill="url(#gb)" fill-opacity="0.887"/>
<rect x="647.1" y="410" width="365.3" height="2" fill="url(#gb)" fill-opacity="0.892"/>
<rect x="647.6" y="412" width="364.4" height="2" fill="url(#gb)" fill-opacity="0.896"/>
<rect x="648.1" y="414" width="363.5" height="2" fill="url(#gb)" fill-opacity="0.901"/>
<rect x="648.5" y="416" width="362.6" height="2" fill="url(#gb)" fill-opacity="0.905"/>
<rect x="648.9" y="418" width="361.7" height="2" fill="url(#gb)" fill-opacity="0.910"/>
<rect x="649.4" y="420" width="360.9" height="2" fill="url(#gb)" fill-opacity="0.914"/>
<rect x="649.8" y="422" width="360.0" height="2" fill="url(#gb)" fill-opacity="0.918"/>
<rect x="650.2" y="424" width="359.2" height="2" fill="url(#gb)" fill-opacity="0.922"/>
<rect x="650.6" y="426" width="358.4" height="2" fill="url(#gb)" fill-opacity="0.926"/>
<rect x="651.0" y="428" width="357.7" height="2" fill="url(#gb)" fill-opacity="0.930"/>
<rect x="651.3" y="430" width="356.9" height="2" fill="url(#gb)" fill-opacity="0.934"/>
<rect x="651.7" y="432" width="356.2" height="2" fill="url(#gb)" fill-opacity="0.938"/>
<rect x="652.0" y="434" width="355.5" height="2" fill="url(#gb)" fill-opacity="0.942"/>
<rect x="652.4" y="436" width="354.8" height="2" fill="url(#gb)" fill-opacity="0.945"/>
<rect x="652.7" y="438" width="354.2" height="2" fill="url(#gb)" fill-opacity="0.949"/>
<rect x="653.0" y="440" width="353.5" height="2" fill="url(#gb)" fill-opacity="0.952"/>
<rect x="653.3" y="442" width="352.9" height="2" fill="url(#gb)" fill-opacity="0.956"/>
<rect x="653.6" y="444" width="352.3" height="2" fill="url(#gb)" fill-opacity="0.959"/>
<rect x="653.9" y="446" width="351.8" height="2" fill="url(#gb)" fill-opacity="0.962"/>
<rect x="654.2" y="448" width="351.2" height="2" fill="url(#gb)" fill-opacity="0.965"/>
<rect x="654.5" y="450" width="350.7" height="2" fill="url(#gb)" fill-opacity="0.968"/>
<rect x="654.7" y="452" width="350.2" height="2" fill="url(#gb)" fill-opacity="0.971"/>
<rect x="654.9" y="454" width="349.7" height="2" fill="url(#gb)" fill-opacity="0.973"/>
<rect x="655.2" y="456" width="349.3" height="2" fill="url(#gb)" fill-opacity="0.976"/>
<rect x="655.4" y="458" width="348.8" height="2" fill="url(#gb)" fill-opacity="0.978"/>
<rect x="655.6" y="460" width="348.4" height="2" fill="url(#gb)" fill-opacity="0.981"/>
<rect x="655.8" y="462" width="348.0" height="2" fill="url(#gb)" fill-opacity="0.983"/>
<rect x="656.0" y="464" width="347.7" height="2" fill="url(#gb)" fill-opacity="0.985"/>
<rect x="656.1" y="466" width="347.3" height="2" fill="url(#gb)" fill-opacity="0.987"/>
<rect x="656.3" y="468" width="347.0" height="2" fill="url(#gb)" fill-opacity="0.989"/>
<rect x="656.4" y="470" width="346.7" height="2" fill="url(#gb)" fill-opacity="0.990"/>
<rect x="656.6" y="472" width="346.4" height="2" fill="url(#gb)" fill-opacity="0.992"/>
<rect x="656.7" y="474" width="346.2" height="2" fill="url(#gb)" fill-opacity="0.993"/>
<rect x="656.8" y="476" width="346.0" height="2" fill="url(#gb)" fill-opacity="0.994"/>
<rect x="656.9" y="478" width="345.8" height="2" fill="url(#gb)" fill-opacity="0.996"/>
<rect x="657.0" y="480" width="345.6" height="2" fill="url(#gb)" fill-opacity="0.997"/>
<rect x="657.1" y="482" width="345.4" height="2" fill="url(#gb)" fill-opacity="0.998"/>
<rect x="657.2" y="484" width="345.3" height="2" fill="url(#gb)" fill-opacity="0.998"/>
<rect x="657.2" y="486" width="345.2" height="2" fill="url(#gb)" fill-opacity="0.999"/>
<rect x="657.2" y="488" width="345.1" height="2" fill="url(#gb)" fill-opacity="0.999"/>
<rect x="657.3" y="490" width="345.0" height="2" fill="url(#gb)" fill-opacity="1.000"/>
<rect x="657.3" y="492" width="345.0" height="2" fill="url(#gb)" fill-opacity="1.000"/>
<rect x="657.3" y="494" width="345.0" height="2" fill="url(#gb)" fill-opacity="1.000"/>
<rect x="657.3" y="496" width="345.0" height="2" fill="url(#gb)" fill-opacity="1.000"/>
<rect x="657.3" y="498" width="345.0" height="2" fill="url(#gb)" fill-opacity="1.000"/>
<rect x="657.2" y="500" width="345.1" height="2" fill="url(#gb)" fill-opacity="0.999"/>
<rect x="657.2" y="502" width="345.2" height="2" fill="url(#gb)" fill-opacity="0.999"/>
<rect x="657.2" y="504" width="345.3" height="2" fill="url(#gb)" fill-opacity="0.998"/>
<rect x="657.1" y="506" width="345.4" height="2" fill="url(#gb)" fill-opacity="0.998"/>
<rect x="657.0" y="508" width="345.6" height="2" fill="url(#gb)" fill-opacity="0.997"/>
<rect x="656.9" y="510" width="345.8" height="2" fill="url(#gb)" fill-opacity="0.996"/>
<rect x="656.8" y="512" width="346.0" height="2" fill="url(#gb)" fill-opacity="0.994"/>
<rect x="656.7" y="514" width="346.2" height="2" fill="url(#gb)" fill-opacity="0.993"/>
<rect x="656.6" y="516" width="346.4" height="2" fill="url(#gb)" fill-opacity="0.992"/>
<rect x="656.4" y="518" width="346.7" height="2" fill="url(#gb)" fill-opacity="0.990"/>
<rect x="656.3" y="520" width="347.0" height="2" fill="url(#gb)" fill-opacity="0.989"/>
<rect x="656.1" y="522" width="347.3" height="2" fill="url(#gb)" fill-opacity="0.987"/>
<rect x="656.0" y="524" width="347.7" height="2" fill="url(#gb)" fill-opacity="0.985"/>
<rect x="655.8" y="526" width="348.0" height="2" fill="url(#gb)" fill-opacity="0.983"/>
<rect x="655.6" y="528" width="348.4" height="2" fill="url(#gb)" fill-opacity="0.981"/>
<rect x="655.4" y="530" width="348.8" height="2" fill="url(#gb)" fill-opacity="0.978"/>
<rect x="655.2" y="532" width="349.3" height="2" fill="url(#gb)" fill-opacity="0.976"/>
<rect x="654.9" y="534" width="349.7" height="2" fill="url(#gb)" fill-opacity="0.973"/>
<rect x="654.7" y="536" width="350.2" height="2" fill="url(#gb)" fill-opacity="0.971"/>
<rect x="654.5" y="538" width="350.7" height="2" fill="url(#gb)" fill-opacity="0.968"/>
<rect x="654.2" y="540" width="351.2" height="2" fill="url(#gb)" fill-opacity="0.965"/>
<rect x="653.9" y="542" width="351.8" height="2" fill="url(#gb)" fill-opacity="0.962"/>
<rect x="653.6" y="544" width="352.3" height="2" fill="url(#gb)" fill-opacity="0.959"/>
<rect x="653.3" y="546" width="352.9" height="2" fill="url(#gb)" fill-opacity="0.956"/>
<rect x="653.0" y="548" width="353.5" height="2" fill="url(#gb)" fill-opacity="0.952"/>
<rect x="652.7" y="550" width="354.2" height="2" fill="url(#gb)" fill-opacity="0.949"/>
<rect x="652.4" y="552" width="354.8" height="2" fill="url(#gb)" fill-opacity="0.945"/>
<rect x="652.0" y="554" width="355.5" height="2" fill="url(#gb)" fill-opacity="0.942"/>
<rect x="651.7" y="556" width="356.2" height="2" fill="url(#gb)" fill-opacity="0.938"/>
<rect x="651.3" y="558" width="356.9" height="2" fill="url(#gb)" fill-opacity="0.934"/>
<rect x="651.0" y="560" width="357.7" height="2" fill="url(#gb)" fill-opacity="0.930"/>
<rect x="650.6" y="562" width="358.4" height="2" fill="url(#gb)" fill-opacity="0.926"/>
<rect x="650.2" y="564" width="359.2" height="2" fill="url(#gb)" fill-opacity="0.922"/>
<rect x="649.8" y="566" width="360.0" height="2" fill="url(#gb)" fill-opacity="0.918"/>
<rect x="649.4" y="568" width="360.9" height="2" fill="url(#gb)" fill-opacity="0.914"/>
<rect x="648.9" y="570" width="361.7" height="2" fill="url(#gb)" fill-opacity="0.910"/>
<rect x="648.5" y="572" width="362.6" height="2" fill="url(#gb)" fill-opacity="0.905"/>
<rect x="648.1" y="574" width="363.5" height="2" fill="url(#gb)" fill-opacity="0.901"/>
<rect x="647.6" y="576" width="364.4" height="2" fill="url(#gb)" fill-opacity="0.896"/>
<rect x="647.1" y="578" width="365.3" height="2" fill="url(#gb)" fill-opacity="0.892"/>
<rect x="646.7" y="580" width="366.3" height="2" fill="url(#gb)" fill-opacity="0.887"/>
<rect x="646.2" y="582" width="367.2" height="2" fill="url(#gb)" fill-opacity="0.883"/>
<rect x="645.7" y="584" width="368.2" height="2" fill="url(#gb)" fill-opacity="0.878"/>
<rect x="645.2" y="586" width="369.2" height="2" fill="url(#gb)" fill-opacity="0.873"/>
<rect x="644.7" y="588" width="370.3" height="2" fill="url(#gb)" fill-opacity="0.868"/>
<rect x="644.1" y="590" width="371.3" height="2" fill="url(#gb)" fill-opacity="0.863"/>
<rect x="643.6" y="592" width="372.4" height="2" fill="url(#gb)" fill-opacity="0.858"/>
<rect x="643.1" y="594" width="373.5" height="2" fill="url(#gb)" fill-opacity="0.853"/>
<rect x="642.5" y="596" width="374.6" height="2" fill="url(#gb)" fill-opacity="0.848"/>
<rect x="642.0" y="598" width="375.7" height="2" fill="url(#gb)" fill-opacity="0.843"/>
<rect x="641.4" y="600" width="376.8" height="2" fill="url(#gb)" fill-opacity="0.838"/>
<rect x="640.8" y="602" width="378.0" height="2" fill="url(#gb)" fill-opacity="0.833"/>
<rect x="640.2" y="604" width="379.2" height="2" fill="url(#gb)" fill-opacity="0.828"/>
<rect x="639.6" y="606" width="380.4" height="2" fill="url(#gb)" fill-opacity="0.823"/>
<rect x="639.0" y="608" width="381.6" height="2" fill="url(#gb)" fill-opacity="0.818"/>
<rect x="638.4" y="610" width="382.8" height="2" fill="url(#gb)" fill-opacity="0.812"/>
<rect x="637.8" y="612" width="384.0" height="2" fill="url(#gb)" fill-opacity="0.807"/>
<rect x="637.1" y="614" width="385.3" height="2" fill="url(#gb)" fill-opacity="0.802"/>
<rect x="636.5" y="616" width="386.6" height="2" fill="url(#gb)" fill-opacity="0.796"/>
<rect x="635.9" y="618" width="387.9" height="2" fill="url(#gb)" fill-opacity="0.791"/>
<rect x="635.2" y="620" width="389.2" height="2" fill="url(#gb)" fill-opacity="0.786"/>
<rect x="634.5" y="622" width="390.5" height="2" fill="url(#gb)" fill-opacity="0.780"/>
<rect x="633.9" y="624" width="391.9" height="2" fill="url(#gb)" fill-opacity="0.775"/>
<rect x="633.2" y="626" width="393.2" height="2" fill="url(#gb)" fill-opacity="0.770"/>
<rect x="632.5" y="628" width="394.6" height="2" fill="url(#gb)" fill-opacity="0.764"/>
<rect x="631.8" y="630" width="396.0" height="2" fill="url(#gb)" fill-opacity="0.759"/>
<rect x="631.1" y="632" width="397.4" height="2" fill="url(#gb)" fill-opacity="0.754"/>
<rect x="630.4" y="634" width="398.9" height="2" fill="url(#gb)" fill-opacity="0.748"/>
<rect x="629.6" y="636" width="400.3" height="2" fill="url(#gb)" fill-opacity="0.743"/>
<rect x="628.9" y="638" width="401.8" height="2" fill="url(#gb)" fill-opacity="0.737"/>
<rect x="628.2" y="640" width="403.2" height="2" fill="url(#gb)" fill-opacity="0.732"/>
<rect x="627.4" y="642" width="404.7" height="2" fill="url(#gb)" fill-opacity="0.727"/>
<rect x="626.7" y="644" width="406.2" height="2" fill="url(#gb)" fill-opacity="0.721"/>
<rect x="625.9" y="646" width="407.7" height="2" fill="url(#gb)" fill-opacity="0.716"/>
<rect x="625.2" y="648" width="409.3" height="2" fill="url(#gb)" fill-opacity="0.711"/>
<rect x="624.4" y="650" width="410.8" height="2" fill="url(#gb)" fill-opacity="0.705"/>
<rect x="623.6" y="652" width="412.4" height="2" fill="url(#gb)" fill-opacity="0.700"/>
<rect x="622.8" y="654" width="414.0" height="2" fill="url(#gb)" fill-opacity="0.695"/>
<rect x="622.0" y="656" width="415.5" height="2" fill="url(#gb)" fill-opacity="0.689"/>
<rect x="621.2" y="658" width="417.1" height="2" fill="url(#gb)" fill-opacity="0.684"/>
<rect x="620.4" y="660" width="418.8" height="2" fill="url(#gb)" fill-opacity="0.679"/>
<rect x="619.6" y="662" width="420.4" height="2" fill="url(#gb)" fill-opacity="0.674"/>
<rect x="618.8" y="664" width="422.0" height="2" fill="url(#gb)" fill-opacity="0.668"/>
<rect x="618.0" y="666" width="423.7" height="2" fill="url(#gb)" fill-opacity="0.663"/>
<rect x="617.1" y="668" width="425.3" height="2" fill="url(#gb)" fill-opacity="0.658"/>
<rect x="616.3" y="670" width="427.0" height="2" fill="url(#gb)" fill-opacity="0.653"/>
<rect x="615.4" y="672" width="428.7" height="2" fill="url(#gb)" fill-opacity="0.648"/>
<rect x="614.6" y="674" width="430.4" height="2" fill="url(#gb)" fill-opacity="0.642"/>
<rect x="613.7" y="676" width="432.1" height="2" fill="url(#gb)" fill-opacity="0.637"/>
<rect x="612.9" y="678" width="433.9" height="2" fill="url(#gb)" fill-opacity="0.632"/>
<rect x="612.0" y="680" width="435.6" height="2" fill="url(#gb)" fill-opacity="0.627"/>
<rect x="611.1" y="682" width="437.4" height="2" fill="url(#gb)" fill-opacity="0.622"/>
<rect x="610.2" y="684" width="439.1" height="2" fill="url(#gb)" fill-opacity="0.617"/>
<rect x="609.4" y="686" width="440.9" height="2" fill="url(#gb)" fill-opacity="0.612"/>
<rect x="608.5" y="688" width="442.7" height="2" fill="url(#gb)" fill-opacity="0.607"/>
<rect x="607.6" y="690" width="444.5" height="2" fill="url(#gb)" fill-opacity="0.602"/>
<rect x="606.7" y="692" width="446.3" height="2" fill="url(#gb)" fill-opacity="0.598"/>
<rect x="605.8" y="694" width="448.1" height="2" fill="url(#gb)" fill-opacity="0.593"/>
<rect x="604.8" y="696" width="449.9" height="2" fill="url(#gb)" fill-opacity="0.588"/>
<rect x="603.9" y="698" width="451.8" height="2" fill="url(#gb)" fill-opacity="0.583"/>
<rect x="603.0" y="700" width="453.6" height="2" fill="url(#gb)" fill-opacity="0.578"/>
<rect x="602.1" y="702" width="455.5" height="2" fill="url(#gb)" fill-opacity="0.574"/>
<rect x="601.1" y="704" width="457.4" height="2" fill="url(#gb)" fill-opacity="0.569"/>
<rect x="600.2" y="706" width="459.2" height="2" fill="url(#gb)" fill-opacity="0.564"/>
<rect x="599.2" y="708" width="461.1" height="2" fill="url(#gb)" fill-opacity="0.560"/>
<rect x="598.3" y="710" width="463.0" height="2" fill="url(#gb)" fill-opacity="0.555"/>
<rect x="597.3" y="712" width="464.9" height="2" fill="url(#gb)" fill-opacity="0.551"/>
<rect x="596.4" y="714" width="466.9" height="2" fill="url(#gb)" fill-opacity="0.546"/>
<rect x="595.4" y="716" width="468.8" height="2" fill="url(#gb)" fill-opacity="0.542"/>
<rect x="594.4" y="718" width="470.7" height="2" fill="url(#gb)" fill-opacity="0.537"/>
<rect x="593.5" y="720" width="472.7" height="2" fill="url(#gb)" fill-opacity="0.533"/>
<rect x="592.5" y="722" width="474.6" height="2" fill="url(#gb)" fill-opacity="0.528"/>
<rect x="591.5" y="724" width="476.6" height="2" fill="url(#gb)" fill-opacity="0.524"/>
<rect x="590.5" y="726" width="478.6" height="2" fill="url(#gb)" fill-opacity="0.520"/>
<rect x="589.5" y="728" width="480.6" height="2" fill="url(#gb)" fill-opacity="0.515"/>
<rect x="588.5" y="730" width="482.6" height="2" fill="url(#gb)" fill-opacity="0.511"/>
<rect x="587.5" y="732" width="484.6" height="2" fill="url(#gb)" fill-opacity="0.507"/>
<rect x="586.5" y="734" width="486.6" height="2" fill="url(#gb)" fill-opacity="0.503"/>
<rect x="585.5" y="736" width="488.6" height="2" fill="url(#gb)" fill-opacity="0.499"/>
<rect x="584.5" y="738" width="490.6" height="2" fill="url(#gb)" fill-opacity="0.494"/>
<rect x="583.5" y="740" width="492.7" height="2" fill="url(#gb)" fill-opacity="0.490"/>
<rect x="582.4" y="742" width="494.7" height="2" fill="url(#gb)" fill-opacity="0.486"/>
<rect x="581.4" y="744" width="496.8" height="2" fill="url(#gb)" fill-opacity="0.482"/>
<rect x="580.4" y="746" width="498.8" height="2" fill="url(#gb)" fill-opacity="0.478"/>
<rect x="579.3" y="748" width="500.9" height="2" fill="url(#gb)" fill-opacity="0.474"/>
<rect x="578.3" y="750" width="503.0" height="2" fill="url(#gb)" fill-opacity="0.470"/>
<rect x="577.3" y="752" width="505.1" height="2" fill="url(#gb)" fill-opacity="0.467"/>
<rect x="576.2" y="754" width="507.2" height="2" fill="url(#gb)" fill-opacity="0.463"/>
<rect x="575.2" y="756" width="509.3" height="2" fill="url(#gb)" fill-opacity="0.459"/>
<rect x="574.1" y="758" width="511.4" height="2" fill="url(#gb)" fill-opacity="0.455"/>
<rect x="573.1" y="760" width="513.5" height="2" fill="url(#gb)" fill-opacity="0.451"/>
<rect x="572.0" y="762" width="515.6" height="2" fill="url(#gb)" fill-opacity="0.448"/>
<rect x="570.9" y="764" width="517.7" height="2" fill="url(#gb)" fill-opacity="0.444"/>
<rect x="569.9" y="766" width="519.9" height="2" fill="url(#gb)" fill-opacity="0.440"/>
<rect x="568.8" y="768" width="522.0" height="2" fill="url(#gb)" fill-opacity="0.437"/>
<rect x="567.7" y="770" width="524.2" height="2" fill="url(#gb)" fill-opacity="0.433"/>
<rect x="566.6" y="772" width="526.3" height="2" fill="url(#gb)" fill-opacity="0.430"/>
<rect x="565.6" y="774" width="528.5" height="2" fill="url(#gb)" fill-opacity="0.426"/>
<rect x="564.5" y="776" width="530.6" height="2" fill="url(#gb)" fill-opacity="0.423"/>
<rect x="563.4" y="778" width="532.8" height="2" fill="url(#gb)" fill-opacity="0.419"/>
<rect x="562.3" y="780" width="535.0" height="2" fill="url(#gb)" fill-opacity="0.416"/>
<rect x="561.2" y="782" width="537.2" height="2" fill="url(#gb)" fill-opacity="0.412"/>
<rect x="560.1" y="784" width="539.4" height="2" fill="url(#gb)" fill-opacity="0.409"/>
<rect x="559.0" y="786" width="541.6" height="2" fill="url(#gb)" fill-opacity="0.406"/>
<rect x="557.9" y="788" width="543.8" height="2" fill="url(#gb)" fill-opacity="0.402"/>
<rect x="556.8" y="790" width="546.0" height="2" fill="url(#gb)" fill-opacity="0.399"/>
<rect x="555.7" y="792" width="548.2" height="2" fill="url(#gb)" fill-opacity="0.396"/>
<rect x="554.6" y="794" width="550.5" height="2" fill="url(#gb)" fill-opacity="0.393"/>
<rect x="553.5" y="796" width="552.7" height="2" fill="url(#gb)" fill-opacity="0.390"/>
<rect x="552.3" y="798" width="554.9" height="2" fill="url(#gb)" fill-opacity="0.387"/>
<rect x="551.2" y="800" width="557.2" height="2" fill="url(#gb)" fill-opacity="0.383"/>
<rect x="550.1" y="802" width="559.4" height="2" fill="url(#gb)" fill-opacity="0.380"/>
<rect x="549.0" y="804" width="561.7" height="2" fill="url(#gb)" fill-opacity="0.377"/>
<rect x="547.8" y="806" width="563.9" height="2" fill="url(#gb)" fill-opacity="0.374"/>
<rect x="546.7" y="808" width="566.2" height="2" fill="url(#gb)" fill-opacity="0.371"/>
<rect x="545.6" y="810" width="568.5" height="2" fill="url(#gb)" fill-opacity="0.368"/>
<rect x="544.4" y="812" width="570.7" height="2" fill="url(#gb)" fill-opacity="0.365"/>
<rect x="543.3" y="814" width="573.0" height="2" fill="url(#gb)" fill-opacity="0.362"/>
<rect x="542.1" y="816" width="575.3" height="2" fill="url(#gb)" fill-opacity="0.360"/>
<rect x="541.0" y="818" width="577.6" height="2" fill="url(#gb)" fill-opacity="0.357"/>
<rect x="539.9" y="820" width="579.9" height="2" fill="url(#gb)" fill-opacity="0.354"/>
<rect x="538.7" y="822" width="582.2" height="2" fill="url(#gb)" fill-opacity="0.351"/>
<rect x="537.6" y="824" width="584.5" height="2" fill="url(#gb)" fill-opacity="0.348"/>
<rect x="536.4" y="826" width="586.8" height="2" fill="url(#gb)" fill-opacity="0.346"/>
<rect x="535.2" y="828" width="589.1" height="2" fill="url(#gb)" fill-opacity="0.343"/>
<rect x="534.1" y="830" width="591.4" height="2" fill="url(#gb)" fill-opacity="0.340"/>
<rect x="532.9" y="832" width="593.8" height="2" fill="url(#gb)" fill-opacity="0.338"/>
<rect x="531.8" y="834" width="596.1" height="2" fill="url(#gb)" fill-opacity="0.335"/>
<rect x="530.6" y="836" width="598.4" height="2" fill="url(#gb)" fill-opacity="0.332"/>
<rect x="529.4" y="838" width="600.8" height="2" fill="url(#gb)" fill-opacity="0.330"/>
<rect x="528.2" y="840" width="603.1" height="2" fill="url(#gb)" fill-opacity="0.327"/>
<rect x="527.1" y="842" width="605.5" height="2" fill="url(#gb)" fill-opacity="0.325"/>
<rect x="525.9" y="844" width="607.8" height="2" fill="url(#gb)" fill-opacity="0.322"/>
<rect x="524.7" y="846" width="610.2" height="2" fill="url(#gb)" fill-opacity="0.320"/>
<rect x="523.5" y="848" width="612.5" height="2" fill="url(#gb)" fill-opacity="0.317"/>
<rect x="522.4" y="850" width="614.9" height="2" fill="url(#gb)" fill-opacity="0.315"/>
<rect x="521.2" y="852" width="617.3" height="2" fill="url(#gb)" fill-opacity="0.312"/>
<rect x="520.0" y="854" width="619.6" height="2" fill="url(#gb)" fill-opacity="0.310"/>
<rect x="518.8" y="856" width="622.0" height="2" fill="url(#gb)" fill-opacity="0.308"/>
<rect x="517.6" y="858" width="624.4" height="2" fill="url(#gb)" fill-opacity="0.305"/>
<rect x="516.4" y="860" width="626.8" height="2" fill="url(#gb)" fill-opacity="0.303"/>
<rect x="515.2" y="862" width="629.2" height="2" fill="url(#gb)" fill-opacity="0.301"/>
<rect x="514.0" y="864" width="631.6" height="2" fill="url(#gb)" fill-opacity="0.298"/>
<rect x="512.8" y="866" width="634.0" height="2" fill="url(#gb)" fill-opacity="0.296"/>
<rect x="511.6" y="868" width="636.4" height="2" fill="url(#gb)" fill-opacity="0.294"/>
<rect x="510.4" y="870" width="638.8" height="2" fill="url(#gb)" fill-opacity="0.292"/>
<rect x="509.2" y="872" width="641.2" height="2" fill="url(#gb)" fill-opacity="0.290"/>
<rect x="508.0" y="874" width="643.6" height="2" fill="url(#gb)" fill-opacity="0.287"/>
<rect x="506.8" y="876" width="646.0" height="2" fill="url(#gb)" fill-opacity="0.285"/>
<rect x="505.6" y="878" width="648.4" height="2" fill="url(#gb)" fill-opacity="0.283"/>
<rect x="504.3" y="880" width="651.1" height="2" fill="url(#gb)" fill-opacity="0.281"/>
<rect x="502.9" y="882" width="653.9" height="2" fill="url(#gb)" fill-opacity="0.279"/>
<rect x="501.4" y="884" width="656.7" height="2" fill="url(#gb)" fill-opacity="0.277"/>
<rect x="500.0" y="886" width="659.6" height="2" fill="url(#gb)" fill-opacity="0.275"/>
<rect x="498.6" y="888" width="662.4" height="2" fill="url(#gb)" fill-opacity="0.273"/>
<rect x="497.2" y="890" width="665.3" height="2" fill="url(#gb)" fill-opacity="0.271"/>
<rect x="495.7" y="892" width="668.1" height="2" fill="url(#gb)" fill-opacity="0.269"/>
<rect x="494.3" y="894" width="671.0" height="2" fill="url(#gb)" fill-opacity="0.267"/>
<rect x="492.9" y="896" width="673.8" height="2" fill="url(#gb)" fill-opacity="0.265"/>
<rect x="491.5" y="898" width="676.7" height="2" fill="url(#gb)" fill-opacity="0.263"/>
<rect x="490.0" y="900" width="679.5" height="2" fill="url(#gb)" fill-opacity="0.261"/>
<rect x="488.6" y="902" width="682.4" height="2" fill="url(#gb)" fill-opacity="0.259"/>
<rect x="487.2" y="904" width="685.3" height="2" fill="url(#gb)" fill-opacity="0.257"/>
<rect x="486.8" y="906" width="686.0" height="2" fill="url(#gb)" fill-opacity="0.257"/>
<rect x="486.8" y="908" width="686.0" height="2" fill="url(#gb)" fill-opacity="0.257"/>
<rect x="486.8" y="910" width="686.0" height="2" fill="url(#gb)" fill-opacity="0.257"/>
<rect x="486.8" y="912" width="686.0" height="2" fill="url(#gb)" fill-opacity="0.257"/>
<rect x="486.8" y="914" width="686.0" height="2" fill="url(#gb)" fill-opacity="0.257"/>
<rect x="486.8" y="916" width="686.0" height="2" fill="url(#gb)" fill-opacity="0.257"/>
<rect x="486.8" y="918" width="686.0" height="2" fill="url(#gb)" fill-opacity="0.257"/>
<rect x="486.8" y="920" width="686.0" height="2" fill="url(#gb)" fill-opacity="0.257"/>
<rect x="486.8" y="922" width="686.0" height="2" fill="url(#gb)" fill-opacity="0.257"/>
<rect x="486.8" y="924" width="686.0" height="2" fill="url(#gb)" fill-opacity="0.257"/>
<rect x="486.8" y="926" width="686.0" height="2" fill="url(#gb)" fill-opacity="0.257"/>
<rect x="486.8" y="928" width="686.0" height="2" fill="url(#gb)" fill-opacity="0.257"/>
<rect x="486.8" y="930" width="686.0" height="2" fill="url(#gb)" fill-opacity="0.257"/>
<rect x="486.8" y="932" width="686.0" height="2" fill="url(#gb)" fill-opacity="0.257"/>
<rect x="486.8" y="934" width="686.0" height="2" fill="url(#gb)" fill-opacity="0.257"/>
<rect x="486.8" y="936" width="686.0" height="2" fill="url(#gb)" fill-opacity="0.257"/>
<rect x="486.8" y="938" width="686.0" height="2" fill="url(#gb)" fill-opacity="0.257"/>
<rect x="486.8" y="940" width="686.0" height="2" fill="url(#gb)" fill-opacity="0.257"/>
<rect x="486.8" y="942" width="686.0" height="2" fill="url(#gb)" fill-opacity="0.257"/>
<rect x="486.8" y="944" width="686.0" height="2" fill="url(#gb)" fill-opacity="0.257"/>
<rect x="486.8" y="946" width="686.0" height="2" fill="url(#gb)" fill-opacity="0.257"/>
<rect x="486.8" y="948" width="686.0" height="2" fill="url(#gb)" fill-opacity="0.257"/>
<rect x="486.8" y="950" width="686.0" height="2" fill="url(#gb)" fill-opacity="0.257"/>
<rect x="486.8" y="952" width="686.0" height="2" fill="url(#gb)" fill-opacity="0.257"/>
<rect x="486.8" y="954" width="686.0" height="2" fill="url(#gb)" fill-opacity="0.257"/>
<rect x="486.8" y="956" width="686.0" height="2" fill="url(#gb)" fill-opacity="0.257"/>
<rect x="486.8" y="958" width="686.0" height="2" fill="url(#gb)" fill-opacity="0.257"/>
<rect x="486.8" y="960" width="686.0" height="2" fill="url(#gb)" fill-opacity="0.257"/>
<rect x="486.8" y="962" width="686.0" height="2" fill="url(#gb)" fill-opacity="0.257"/>
<rect x="486.8" y="964" width="686.0" height="2" fill="url(#gb)" fill-opacity="0.257"/>
<rect x="486.8" y="966" width="686.0" height="2" fill="url(#gb)" fill-opacity="0.257"/>
<rect x="486.8" y="968" width="686.0" height="2" fill="url(#gb)" fill-opacity="0.257"/>
<rect x="486.8" y="970" width="686.0" height="2" fill="url(#gb)" fill-opacity="0.257"/>
<rect x="486.8" y="972" width="686.0" height="2" fill="url(#gb)" fill-opacity="0.257"/>
</g>
<ellipse cx="829.8" cy="905.5" rx="347" ry="30.5" fill="#e6e9f6" fill-opacity="0.42" stroke="#000" stroke-width="1.2"/>
<path d="M466.3,891 L487.5,891 L495.6,898.3 L480.8,898.3 L480.8,912.6 L495.6,912.6 L487.5,919.6 L480.8,919.6 L480.8,975 L466.3,975 Z" fill="#404040" stroke="#000" stroke-width="1.2"/>
<rect x="481.3" y="901.5" width="700" height="9" fill="#fff"/>
<rect x="481.3" y="901.5" width="700" height="9" fill="url(#lensg)" fill-opacity="0.8" stroke="#111" stroke-width="1.2"/>
<rect x="466.5" y="974.5" width="700" height="103" fill="#404040" stroke="#000" stroke-width="1.2"/>
<path d="M486.6,80.0 L489.1,84.0 L491.6,88.0 L494.0,92.0 L496.5,96.0 L498.9,100.0 L501.3,104.0 L503.8,108.0 L506.2,112.0 L508.6,116.0 L511.0,120.0 L513.4,124.0 L515.8,128.0 L518.2,132.0 L520.6,136.0 L522.9,140.0 L525.3,144.0 L527.7,148.0 L530.0,152.0 L532.3,156.0 L534.7,160.0 L537.0,164.0 L539.3,168.0 L541.6,172.0 L543.9,176.0 L546.1,180.0 L548.4,184.0 L550.7,188.0 L552.9,192.0 L555.1,196.0 L557.3,200.0 L559.6,204.0 L561.7,208.0 L563.9,212.0 L566.1,216.0 L568.3,220.0 L570.4,224.0 L572.5,228.0 L574.6,232.0 L576.7,236.0 L578.8,240.0 L580.9,244.0 L583.0,248.0 L585.0,252.0 L587.0,256.0 L589.0,260.0 L591.0,264.0 L593.0,268.0 L594.9,272.0 L596.8,276.0 L598.8,280.0 L600.7,284.0 L602.5,288.0 L604.4,292.0 L606.2,296.0 L608.0,300.0 L609.8,304.0 L611.6,308.0 L613.3,312.0 L615.0,316.0 L616.7,320.0 L618.4,324.0 L620.0,328.0 L621.6,332.0 L623.2,336.0 L624.8,340.0 L626.3,344.0 L627.8,348.0 L629.3,352.0 L630.7,356.0 L632.1,360.0 L633.5,364.0 L634.9,368.0 L636.2,372.0 L637.5,376.0 L638.7,380.0 L639.9,384.0 L641.1,388.0 L642.2,392.0 L643.3,396.0 L644.4,400.0 L645.4,404.0 L646.4,408.0 L647.4,412.0 L648.3,416.0 L649.2,420.0 L650.0,424.0 L650.8,428.0 L651.5,432.0 L652.2,436.0 L652.9,440.0 L653.5,444.0 L654.1,448.0 L654.6,452.0 L655.1,456.0 L655.5,460.0 L655.9,464.0 L656.2,468.0 L656.5,472.0 L656.8,476.0 L657.0,480.0 L657.1,484.0 L657.2,488.0 L657.3,492.0 L657.3,496.0 L657.3,500.0 L657.2,504.0 L657.0,508.0 L656.9,512.0 L656.6,516.0 L656.4,520.0 L656.1,524.0 L655.7,528.0 L655.3,532.0 L654.8,536.0 L654.3,540.0 L653.8,544.0 L653.2,548.0 L652.6,552.0 L651.9,556.0 L651.2,560.0 L650.4,564.0 L649.6,568.0 L648.7,572.0 L647.8,576.0 L646.9,580.0 L645.9,584.0 L644.9,588.0 L643.9,592.0 L642.8,596.0 L641.7,600.0 L640.5,604.0 L639.3,608.0 L638.1,612.0 L636.8,616.0 L635.5,620.0 L634.2,624.0 L632.8,628.0 L631.4,632.0 L630.0,636.0 L628.6,640.0 L627.1,644.0 L625.5,648.0 L624.0,652.0 L622.4,656.0 L620.8,660.0 L619.2,664.0 L617.5,668.0 L615.9,672.0 L614.2,676.0 L612.4,680.0 L610.7,684.0 L608.9,688.0 L607.1,692.0 L605.3,696.0 L603.5,700.0 L601.6,704.0 L599.7,708.0 L597.8,712.0 L595.9,716.0 L593.9,720.0 L592.0,724.0 L590.0,728.0 L588.0,732.0 L586.0,736.0 L584.0,740.0 L581.9,744.0 L579.9,748.0 L577.8,752.0 L575.7,756.0 L573.6,760.0 L571.5,764.0 L569.3,768.0 L567.2,772.0 L565.0,776.0 L562.8,780.0 L560.7,784.0 L558.5,788.0 L556.2,792.0 L554.0,796.0 L551.8,800.0 L549.5,804.0 L547.3,808.0 L545.0,812.0 L542.7,816.0 L540.4,820.0 L538.1,824.0 L535.8,828.0 L533.5,832.0 L531.2,836.0 L528.8,840.0 L526.5,844.0 L524.1,848.0 L521.8,852.0 L519.4,856.0 L517.0,860.0 L514.6,864.0 L512.2,868.0 L509.8,872.0 L507.4,876.0 L505.0,880.0 L502.1,884.0 L499.3,888.0 L496.5,892.0 L487,896 M487,914 L487,973" fill="none" stroke="#4c4c4c" stroke-width="1.5" stroke-dasharray="3.8 8"/>
<path d="M1173.0,80.0 L1170.5,84.0 L1168.0,88.0 L1165.6,92.0 L1163.1,96.0 L1160.7,100.0 L1158.3,104.0 L1155.8,108.0 L1153.4,112.0 L1151.0,116.0 L1148.6,120.0 L1146.2,124.0 L1143.8,128.0 L1141.4,132.0 L1139.0,136.0 L1136.7,140.0 L1134.3,144.0 L1131.9,148.0 L1129.6,152.0 L1127.3,156.0 L1124.9,160.0 L1122.6,164.0 L1120.3,168.0 L1118.0,172.0 L1115.7,176.0 L1113.5,180.0 L1111.2,184.0 L1108.9,188.0 L1106.7,192.0 L1104.5,196.0 L1102.3,200.0 L1100.0,204.0 L1097.9,208.0 L1095.7,212.0 L1093.5,216.0 L1091.3,220.0 L1089.2,224.0 L1087.1,228.0 L1085.0,232.0 L1082.9,236.0 L1080.8,240.0 L1078.7,244.0 L1076.6,248.0 L1074.6,252.0 L1072.6,256.0 L1070.6,260.0 L1068.6,264.0 L1066.6,268.0 L1064.7,272.0 L1062.8,276.0 L1060.8,280.0 L1058.9,284.0 L1057.1,288.0 L1055.2,292.0 L1053.4,296.0 L1051.6,300.0 L1049.8,304.0 L1048.0,308.0 L1046.3,312.0 L1044.6,316.0 L1042.9,320.0 L1041.2,324.0 L1039.6,328.0 L1038.0,332.0 L1036.4,336.0 L1034.8,340.0 L1033.3,344.0 L1031.8,348.0 L1030.3,352.0 L1028.9,356.0 L1027.5,360.0 L1026.1,364.0 L1024.7,368.0 L1023.4,372.0 L1022.1,376.0 L1020.9,380.0 L1019.7,384.0 L1018.5,388.0 L1017.4,392.0 L1016.3,396.0 L1015.2,400.0 L1014.2,404.0 L1013.2,408.0 L1012.2,412.0 L1011.3,416.0 L1010.4,420.0 L1009.6,424.0 L1008.8,428.0 L1008.1,432.0 L1007.4,436.0 L1006.7,440.0 L1006.1,444.0 L1005.5,448.0 L1005.0,452.0 L1004.5,456.0 L1004.1,460.0 L1003.7,464.0 L1003.4,468.0 L1003.1,472.0 L1002.8,476.0 L1002.6,480.0 L1002.5,484.0 L1002.4,488.0 L1002.3,492.0 L1002.3,496.0 L1002.3,500.0 L1002.4,504.0 L1002.6,508.0 L1002.7,512.0 L1003.0,516.0 L1003.2,520.0 L1003.5,524.0 L1003.9,528.0 L1004.3,532.0 L1004.8,536.0 L1005.3,540.0 L1005.8,544.0 L1006.4,548.0 L1007.0,552.0 L1007.7,556.0 L1008.4,560.0 L1009.2,564.0 L1010.0,568.0 L1010.9,572.0 L1011.8,576.0 L1012.7,580.0 L1013.7,584.0 L1014.7,588.0 L1015.7,592.0 L1016.8,596.0 L1017.9,600.0 L1019.1,604.0 L1020.3,608.0 L1021.5,612.0 L1022.8,616.0 L1024.1,620.0 L1025.4,624.0 L1026.8,628.0 L1028.2,632.0 L1029.6,636.0 L1031.0,640.0 L1032.5,644.0 L1034.1,648.0 L1035.6,652.0 L1037.2,656.0 L1038.8,660.0 L1040.4,664.0 L1042.1,668.0 L1043.7,672.0 L1045.4,676.0 L1047.2,680.0 L1048.9,684.0 L1050.7,688.0 L1052.5,692.0 L1054.3,696.0 L1056.1,700.0 L1058.0,704.0 L1059.9,708.0 L1061.8,712.0 L1063.7,716.0 L1065.7,720.0 L1067.6,724.0 L1069.6,728.0 L1071.6,732.0 L1073.6,736.0 L1075.6,740.0 L1077.7,744.0 L1079.7,748.0 L1081.8,752.0 L1083.9,756.0 L1086.0,760.0 L1088.1,764.0 L1090.3,768.0 L1092.4,772.0 L1094.6,776.0 L1096.8,780.0 L1098.9,784.0 L1101.1,788.0 L1103.4,792.0 L1105.6,796.0 L1107.8,800.0 L1110.1,804.0 L1112.3,808.0 L1114.6,812.0 L1116.9,816.0 L1119.2,820.0 L1121.5,824.0 L1123.8,828.0 L1126.1,832.0 L1128.4,836.0 L1130.8,840.0 L1133.1,844.0 L1135.5,848.0 L1137.8,852.0 L1140.2,856.0 L1142.6,860.0 L1145.0,864.0 L1147.4,868.0 L1149.8,872.0 L1152.2,876.0 L1154.6,880.0 L1157.5,884.0 L1160.3,888.0 L1163.1,892.0" fill="none" stroke="#4c4c4c" stroke-width="1.5" stroke-dasharray="3.8 8"/>
<path d="M829.75,99.89 L824.00,99.89 L824.00,97.83 L818.25,100.70 L824.00,103.58 L824.00,101.51 L829.75,101.51 Z" fill="none" stroke="#e83a06" stroke-width="2.6" stroke-linejoin="miter"/>
<path d="M754.15,99.95 L748.80,99.95 L748.80,98.03 L743.45,100.70 L748.80,103.38 L748.80,101.45 L754.15,101.45 Z" fill="none" stroke="#e83a06" stroke-width="2.6" stroke-linejoin="miter"/>
<path d="M905.35,99.95 L900.00,99.95 L900.00,98.03 L894.65,100.70 L900.00,103.38 L900.00,101.45 L905.35,101.45 Z" fill="none" stroke="#e83a06" stroke-width="2.6" stroke-linejoin="miter"/>
<path d="M678.55,100.18 L674.85,100.18 L674.85,98.85 L671.15,100.70 L674.85,102.55 L674.85,101.22 L678.55,101.22 Z" fill="none" stroke="#e83a06" stroke-width="2.6" stroke-linejoin="miter"/>
<path d="M980.95,100.18 L977.25,100.18 L977.25,98.85 L973.55,100.70 L977.25,102.55 L977.25,101.22 L980.95,101.22 Z" fill="none" stroke="#e83a06" stroke-width="2.6" stroke-linejoin="miter"/>
<path d="M602.95,100.37 L600.60,100.37 L600.60,99.53 L598.25,100.70 L600.60,101.88 L600.60,101.03 L602.95,101.03 Z" fill="none" stroke="#e83a06" stroke-width="2.6" stroke-linejoin="miter"/>
<path d="M1056.55,100.37 L1054.20,100.37 L1054.20,99.53 L1051.85,100.70 L1054.20,101.88 L1054.20,101.03 L1056.55,101.03 Z" fill="none" stroke="#e83a06" stroke-width="2.6" stroke-linejoin="miter"/>
<path d="M829.75,177.36 L818.05,177.36 L818.05,173.15 L806.35,179.00 L818.05,184.85 L818.05,180.64 L829.75,180.64 Z" fill="none" stroke="#e83a06" stroke-width="2.6" stroke-linejoin="miter"/>
<path d="M754.15,177.54 L743.70,177.54 L743.70,173.78 L733.25,179.00 L743.70,184.22 L743.70,180.46 L754.15,180.46 Z" fill="none" stroke="#e83a06" stroke-width="2.6" stroke-linejoin="miter"/>
<path d="M905.35,177.54 L894.90,177.54 L894.90,173.78 L884.45,179.00 L894.90,184.22 L894.90,180.46 L905.35,180.46 Z" fill="none" stroke="#e83a06" stroke-width="2.6" stroke-linejoin="miter"/>
<path d="M678.55,178.04 L671.70,178.04 L671.70,175.57 L664.85,179.00 L671.70,182.43 L671.70,179.96 L678.55,179.96 Z" fill="none" stroke="#e83a06" stroke-width="2.6" stroke-linejoin="miter"/>
<path d="M980.95,178.04 L974.10,178.04 L974.10,175.57 L967.25,179.00 L974.10,182.43 L974.10,179.96 L980.95,179.96 Z" fill="none" stroke="#e83a06" stroke-width="2.6" stroke-linejoin="miter"/>
<path d="M602.95,178.50 L599.35,178.50 L599.35,177.20 L595.75,179.00 L599.35,180.80 L599.35,179.50 L602.95,179.50 Z" fill="none" stroke="#e83a06" stroke-width="2.6" stroke-linejoin="miter"/>
<path d="M1056.55,178.50 L1052.95,178.50 L1052.95,177.20 L1049.35,179.00 L1052.95,180.80 L1052.95,179.50 L1056.55,179.50 Z" fill="none" stroke="#e83a06" stroke-width="2.6" stroke-linejoin="miter"/>
<path d="M829.75,255.27 L814.55,255.27 L814.55,249.80 L799.35,257.40 L814.55,265.00 L814.55,259.53 L829.75,259.53 Z" fill="none" stroke="#e83a06" stroke-width="2.6" stroke-linejoin="miter"/>
<path d="M754.15,255.64 L741.55,255.64 L741.55,251.10 L728.95,257.40 L741.55,263.70 L741.55,259.16 L754.15,259.16 Z" fill="none" stroke="#e83a06" stroke-width="2.6" stroke-linejoin="miter"/>
<path d="M905.35,255.64 L892.75,255.64 L892.75,251.10 L880.15,257.40 L892.75,263.70 L892.75,259.16 L905.35,259.16 Z" fill="none" stroke="#e83a06" stroke-width="2.6" stroke-linejoin="miter"/>
<path d="M678.55,256.40 L671.40,256.40 L671.40,253.82 L664.25,257.40 L671.40,260.97 L671.40,258.40 L678.55,258.40 Z" fill="none" stroke="#e83a06" stroke-width="2.6" stroke-linejoin="miter"/>
<path d="M980.95,256.40 L973.80,256.40 L973.80,253.82 L966.65,257.40 L973.80,260.97 L973.80,258.40 L980.95,258.40 Z" fill="none" stroke="#e83a06" stroke-width="2.6" stroke-linejoin="miter"/>
<path d="M829.75,333.98 L819.60,333.98 L819.60,330.32 L809.45,335.40 L819.60,340.47 L819.60,336.82 L829.75,336.82 Z" fill="none" stroke="#e83a06" stroke-width="2.6" stroke-linejoin="miter"/>
<path d="M754.15,334.38 L746.90,334.38 L746.90,331.77 L739.65,335.40 L746.90,339.02 L746.90,336.41 L754.15,336.41 Z" fill="none" stroke="#e83a06" stroke-width="2.6" stroke-linejoin="miter"/>
<path d="M905.35,334.38 L898.10,334.38 L898.10,331.77 L890.85,335.40 L898.10,339.02 L898.10,336.41 L905.35,336.41 Z" fill="none" stroke="#e83a06" stroke-width="2.6" stroke-linejoin="miter"/>
<path d="M678.55,334.93 L675.20,334.93 L675.20,333.72 L671.85,335.40 L675.20,337.07 L675.20,335.87 L678.55,335.87 Z" fill="none" stroke="#e83a06" stroke-width="2.6" stroke-linejoin="miter"/>
<path d="M980.95,334.93 L977.60,334.93 L977.60,333.72 L974.25,335.40 L977.60,337.07 L977.60,335.87 L980.95,335.87 Z" fill="none" stroke="#e83a06" stroke-width="2.6" stroke-linejoin="miter"/>
<path d="M829.75,413.03 L836.65,413.03 L836.65,410.55 L843.55,414.00 L836.65,417.45 L836.65,414.97 L829.75,414.97 Z" fill="none" stroke="#e83a06" stroke-width="2.6" stroke-linejoin="miter"/>
<path d="M754.15,413.31 L759.05,413.31 L759.05,411.55 L763.95,414.00 L759.05,416.45 L759.05,414.69 L754.15,414.69 Z" fill="none" stroke="#e83a06" stroke-width="2.6" stroke-linejoin="miter"/>
<path d="M905.35,413.31 L910.25,413.31 L910.25,411.55 L915.15,414.00 L910.25,416.45 L910.25,414.69 L905.35,414.69 Z" fill="none" stroke="#e83a06" stroke-width="2.6" stroke-linejoin="miter"/>
<path d="M678.5,412.4 L681.2,412.4 L681.2,410.2 L684.8,414.0 L681.2,417.8 L681.2,415.6 L678.5,415.6Z" fill="#e83a06"/>
<path d="M981.0,412.4 L983.6,412.4 L983.6,410.2 L987.2,414.0 L983.6,417.8 L983.6,415.6 L981.0,415.6Z" fill="#e83a06"/>
<path d="M829.75,490.35 L854.20,490.35 L854.20,480.70 L878.65,492.70 L854.20,504.70 L854.20,495.05 L829.75,495.05 Z" fill="none" stroke="#e83a06" stroke-width="2.6" stroke-linejoin="miter"/>
<path d="M754.15,490.50 L772.10,490.50 L772.10,483.72 L790.05,492.70 L772.10,501.68 L772.10,494.90 L754.15,494.90 Z" fill="none" stroke="#e83a06" stroke-width="2.6" stroke-linejoin="miter"/>
<path d="M905.35,490.50 L923.30,490.50 L923.30,483.72 L941.25,492.70 L923.30,501.68 L923.30,494.90 L905.35,494.90 Z" fill="none" stroke="#e83a06" stroke-width="2.6" stroke-linejoin="miter"/>
<path d="M678.55,491.89 L684.30,491.89 L684.30,489.82 L690.05,492.70 L684.30,495.57 L684.30,493.50 L678.55,493.50 Z" fill="none" stroke="#e83a06" stroke-width="2.6" stroke-linejoin="miter"/>
<path d="M980.95,491.89 L986.70,491.89 L986.70,489.82 L992.45,492.70 L986.70,495.57 L986.70,493.50 L980.95,493.50 Z" fill="none" stroke="#e83a06" stroke-width="2.6" stroke-linejoin="miter"/>
<path d="M829.75,568.48 L863.35,568.48 L863.35,559.30 L891.35,571.30 L863.35,583.30 L863.35,574.12 L829.75,574.12 Z" fill="none" stroke="#e83a06" stroke-width="2.6" stroke-linejoin="miter"/>
<path d="M754.15,569.10 L775.70,569.10 L775.70,560.52 L797.25,571.30 L775.70,582.07 L775.70,573.50 L754.15,573.50 Z" fill="none" stroke="#e83a06" stroke-width="2.6" stroke-linejoin="miter"/>
<path d="M905.35,569.10 L926.90,569.10 L926.90,560.52 L948.45,571.30 L926.90,582.07 L926.90,573.50 L905.35,573.50 Z" fill="none" stroke="#e83a06" stroke-width="2.6" stroke-linejoin="miter"/>
<path d="M678.55,570.24 L686.15,570.24 L686.15,567.50 L693.75,571.30 L686.15,575.10 L686.15,572.36 L678.55,572.36 Z" fill="none" stroke="#e83a06" stroke-width="2.6" stroke-linejoin="miter"/>
<path d="M980.95,570.24 L988.55,570.24 L988.55,567.50 L996.15,571.30 L988.55,575.10 L988.55,572.36 L980.95,572.36 Z" fill="none" stroke="#e83a06" stroke-width="2.6" stroke-linejoin="miter"/>
<path d="M829.75,647.50 L848.50,647.50 L848.50,640.33 L867.25,649.70 L848.50,659.08 L848.50,651.90 L829.75,651.90 Z" fill="none" stroke="#e83a06" stroke-width="2.6" stroke-linejoin="miter"/>
<path d="M754.15,647.73 L768.25,647.73 L768.25,642.65 L782.35,649.70 L768.25,656.75 L768.25,651.67 L754.15,651.67 Z" fill="none" stroke="#e83a06" stroke-width="2.6" stroke-linejoin="miter"/>
<path d="M905.35,647.73 L919.45,647.73 L919.45,642.65 L933.55,649.70 L919.45,656.75 L919.45,651.67 L905.35,651.67 Z" fill="none" stroke="#e83a06" stroke-width="2.6" stroke-linejoin="miter"/>
<path d="M678.55,648.88 L684.40,648.88 L684.40,646.78 L690.25,649.70 L684.40,652.62 L684.40,650.52 L678.55,650.52 Z" fill="none" stroke="#e83a06" stroke-width="2.6" stroke-linejoin="miter"/>
<path d="M980.95,648.88 L986.80,648.88 L986.80,646.78 L992.65,649.70 L986.80,652.62 L986.80,650.52 L980.95,650.52 Z" fill="none" stroke="#e83a06" stroke-width="2.6" stroke-linejoin="miter"/>
<path d="M829.75,727.00 L834.05,727.00 L834.05,725.45 L838.35,727.60 L834.05,729.75 L834.05,728.20 L829.75,728.20 Z" fill="none" stroke="#e83a06" stroke-width="2.6" stroke-linejoin="miter"/>
<path d="M754.15,727.14 L757.40,727.14 L757.40,725.98 L760.65,727.60 L757.40,729.23 L757.40,728.06 L754.15,728.06 Z" fill="none" stroke="#e83a06" stroke-width="2.6" stroke-linejoin="miter"/>
<path d="M905.35,727.14 L908.60,727.14 L908.60,725.98 L911.85,727.60 L908.60,729.23 L908.60,728.06 L905.35,728.06 Z" fill="none" stroke="#e83a06" stroke-width="2.6" stroke-linejoin="miter"/>
<path d="M829.75,805.22 L824.20,805.22 L824.20,803.23 L818.65,806.00 L824.20,808.77 L824.20,806.78 L829.75,806.78 Z" fill="none" stroke="#e83a06" stroke-width="2.6" stroke-linejoin="miter"/>
<path d="M754.15,805.33 L749.35,805.33 L749.35,803.60 L744.55,806.00 L749.35,808.40 L749.35,806.67 L754.15,806.67 Z" fill="none" stroke="#e83a06" stroke-width="2.6" stroke-linejoin="miter"/>
<path d="M905.35,805.33 L900.55,805.33 L900.55,803.60 L895.75,806.00 L900.55,808.40 L900.55,806.67 L905.35,806.67 Z" fill="none" stroke="#e83a06" stroke-width="2.6" stroke-linejoin="miter"/>
<path d="M678.55,805.66 L676.10,805.66 L676.10,804.77 L673.65,806.00 L676.10,807.23 L676.10,806.34 L678.55,806.34 Z" fill="none" stroke="#e83a06" stroke-width="2.6" stroke-linejoin="miter"/>
<path d="M980.95,805.66 L978.50,805.66 L978.50,804.77 L976.05,806.00 L978.50,807.23 L978.50,806.34 L980.95,806.34 Z" fill="none" stroke="#e83a06" stroke-width="2.6" stroke-linejoin="miter"/>
<path d="M603.0,804.4 L600.3,804.4 L600.3,802.2 L596.8,806.0 L600.3,809.8 L600.3,807.6 L603.0,807.6Z" fill="#e83a06"/>
<path d="M1056.5,804.4 L1053.9,804.4 L1053.9,802.2 L1050.3,806.0 L1053.9,809.8 L1053.9,807.6 L1056.5,807.6Z" fill="#e83a06"/>
<path d="M829.75,883.59 L822.50,883.59 L822.50,880.98 L815.25,884.60 L822.50,888.23 L822.50,885.62 L829.75,885.62 Z" fill="none" stroke="#e83a06" stroke-width="2.6" stroke-linejoin="miter"/>
<path d="M754.15,883.63 L747.20,883.63 L747.20,881.12 L740.25,884.60 L747.20,888.08 L747.20,885.57 L754.15,885.57 Z" fill="none" stroke="#e83a06" stroke-width="2.6" stroke-linejoin="miter"/>
<path d="M905.35,883.63 L898.40,883.63 L898.40,881.12 L891.45,884.60 L898.40,888.08 L898.40,885.57 L905.35,885.57 Z" fill="none" stroke="#e83a06" stroke-width="2.6" stroke-linejoin="miter"/>
<path d="M678.55,883.92 L673.70,883.92 L673.70,882.18 L668.85,884.60 L673.70,887.02 L673.70,885.28 L678.55,885.28 Z" fill="none" stroke="#e83a06" stroke-width="2.6" stroke-linejoin="miter"/>
<path d="M980.95,883.92 L976.10,883.92 L976.10,882.18 L971.25,884.60 L976.10,887.02 L976.10,885.28 L980.95,885.28 Z" fill="none" stroke="#e83a06" stroke-width="2.6" stroke-linejoin="miter"/>
<path d="M602.95,884.20 L600.10,884.20 L600.10,883.18 L597.25,884.60 L600.10,886.02 L600.10,885.00 L602.95,885.00 Z" fill="none" stroke="#e83a06" stroke-width="2.6" stroke-linejoin="miter"/>
<path d="M1056.55,884.20 L1053.70,884.20 L1053.70,883.18 L1050.85,884.60 L1053.70,886.02 L1053.70,885.00 L1056.55,885.00 Z" fill="none" stroke="#e83a06" stroke-width="2.6" stroke-linejoin="miter"/>
<path d="M521.3,98.8 L527.4,98.8 L527.4,104.8 Z" fill="#e83a06"/>
<path d="M1127.4,98.8 L1133.5,98.8 L1133.5,104.8 Z" fill="#e83a06"/>
<path d="M676.8,725.7 L687.2,729.1 L687.2,730 L676.8,730 Z" fill="#e83a06"/>
<path d="M979.4,725.7 L989.8,729.1 L989.8,730 L979.4,730 Z" fill="#e83a06"/>
<path d="M518.7,883 L527,883 L531,886.7 L525,886.7 Z" fill="#e83a06"/>
<path d="M1125.5,883 L1133.8,883 L1137.8,886.7 L1131.8,886.7 Z" fill="#e83a06"/>
<circle cx="887.3" cy="496.3" r="68.5" fill="#c8c800" fill-opacity="0.784"/>
<circle cx="887.3" cy="496.3" r="68.5" fill="url(#beadhl)"/>
<path d="M887.5,486 V506.5" stroke="#444" stroke-width="1" stroke-opacity="0.7"/>
<path d="M887.33,493.80 L746.23,492.47 L746.33,481.97 L718.20,495.20 L746.07,508.96 L746.17,498.46 L887.27,499.80Z" fill="#ff0000" stroke="#000" stroke-width="1.55" stroke-linejoin="miter"/>
<path d="M887.27,499.80 L1029.47,501.06 L1029.39,511.06 L1057.00,498.30 L1029.62,485.06 L1029.53,495.06 L887.33,493.80Z" fill="#4dfff7" stroke="#000" stroke-width="1.55" stroke-linejoin="miter"/>
</g>
</svg>
<!-- control panel -->
<div class="abs" style="left:1154px;top:80px;width:230px;height:1034px;border-left:1px solid #7f9db9;border-bottom:1px solid #7f9db9;box-sizing:border-box;background:#ece9d8"></div>
<div class="hdr" style="left:1160px;top:86px">Simulation speed:</div>
<div class="tf" style="left:1283px;top:83px;width:72px;height:21px;"><span class="t" style="right:4px;top:3px;font-size:13px;letter-spacing:0.5px">4.1E-17</span></div>
<div class="lbl" style="left:1359px;top:86px">sec</div>
<div class="lbl" style="left:1201px;top:108px;">slow</div>
<div class="lbl" style="left:1293px;top:108px;">fast</div>
<svg class="abs" style="left:1160px;top:124px" width="224" height="40" viewBox="1160 124 224 40">
<rect x="1177.5" y="128.5" width="164" height="18.5" fill="#b2fcb2" stroke="#000" stroke-width="1"/>
<rect x="1251.5" y="128.5" width="16" height="18.5" fill="#404040"/>
<rect x="1267.5" y="128.5" width="74" height="18.5" fill="#30b030"/>
<rect x="1177.5" y="128.5" width="164" height="18.5" fill="none" stroke="#000" stroke-width="1.2"/>
<path d="M1177,137.8 H1342" stroke="#000" stroke-width="1.8"/>
<path d="M1177.5,147 V157 M1251.5,128 V157 M1267.5,128 V157 M1341.5,147 V157" stroke="#000" stroke-width="1.2"/>
<path d="M1205.5,128.5 H1219.500 V138.5 L1212.500,144.5 L1205.5,138.5 Z" fill="#fff" stroke="#444" stroke-width="1"/>
</svg>
<div class="lbl sm" style="left:1162px;top:159px;">4E-18</div>
<div class="lbl sm" style="left:1221px;top:159px;">5E-16</div>
<div class="lbl sm" style="left:1267px;top:159px;">1E-07</div>
<div class="lbl sm" style="left:1325px;top:159px;">4E-05</div>
<style>.sm{font-size:10px;letter-spacing:0.75px}</style>

<div class="sep" style="top:176px"></div>
<div class="hdr" style="left:1160px;top:180px">Laser display:</div>
<div class="rb" style="left:1164px;top:204px"></div><div class="lbl" style="left:1181px;top:203px">beam</div>
<svg class="abs" style="left:1220px;top:199px" width="26" height="22" viewBox="0 0 26 22"><defs><linearGradient id="bi" x1="0" y1="0" x2="1" y2="0"><stop offset="0" stop-color="#ff2020" stop-opacity="0"/><stop offset="0.28" stop-color="#ff1010" stop-opacity="0.35"/><stop offset="0.42" stop-color="#ff0000" stop-opacity="0.85"/><stop offset="0.5" stop-color="#ff0000" stop-opacity="0.95"/><stop offset="0.58" stop-color="#ff0000" stop-opacity="0.85"/><stop offset="0.72" stop-color="#ff1010" stop-opacity="0.35"/><stop offset="1" stop-color="#ff2020" stop-opacity="0"/></linearGradient><radialGradient id="bi2" cx="0.5" cy="0.5" r="0.5"><stop offset="0" stop-color="#ff0000"/><stop offset="0.6" stop-color="#ff0000"/><stop offset="1" stop-color="#ff0000" stop-opacity="0"/></radialGradient></defs><path d="M1,1 H25 C20.500,6 19.500,9 19.500,11 C19.500,13 20.500,16 25,21 H1 C5.500,16 6.500,13 6.500,11 C6.500,9 5.500,6 1,1 Z" fill="url(#bi)"/><ellipse cx="13" cy="11" rx="5.500" ry="9.500" fill="url(#bi2)"/></svg>
<div class="rb" style="left:1164px;top:231px"></div><div class="lbl" style="left:1181px;top:230px">electric field</div>
<svg class="abs" style="left:1255px;top:229px" width="32" height="18" viewBox="0 0 32 18"><path d="M4.2,8.25 L13.3,3.6 L13.3,6.35 L28,6.35 L28,10.15 L13.3,10.15 L13.3,12.9 Z" fill="#e83a06" fill-opacity="0.22" stroke="#e83a06" stroke-width="2"/></svg>
<div class="rb on foc" style="left:1164px;top:258px"></div><div class="lbl" style="left:1181px;top:257px">both</div>
<div class="abs" style="left:1181px;top:257px;width:26px;height:15px;border:1px dotted #000;box-sizing:border-box"></div>
<style>.rb.foc{border-color:#1c5180;box-shadow:inset 0 0 0 1.6px #f2b43c, inset 0 0 0 2.6px #fbe0a0;}</style>

<div class="sep" style="top:278px"></div>
<div class="hdr" style="left:1160px;top:282px">Bead's charge:</div>
<div class="rb on" style="left:1164px;top:306px"></div><div class="lbl" style="left:1181px;top:305px">hidden</div>
<div class="rb" style="left:1164px;top:333px"></div><div class="lbl" style="left:1181px;top:332px">charge distribution</div>
<div class="rb" style="left:1164px;top:360px"></div><div class="lbl" style="left:1181px;top:359px">excess charge</div>

<div class="sep" style="top:380px"></div>
<div class="hdr" style="left:1160px;top:384px">Forces on Bead:</div>
<div class="cb on" style="left:1164px;top:408px"></div><div class="lbl" style="left:1180px;top:407px">Show optical trap force</div>
<svg class="abs" style="left:1316px;top:405px" width="32" height="18" viewBox="0 0 32 18"><path d="M3,9 L12.5,4.2 L12.5,7.6 L28,7.6 L28,10.4 L12.5,10.4 L12.5,13.8 Z" fill="#f00" stroke="#000" stroke-width="0.9"/></svg>
<div class="cb on" style="left:1164px;top:435px"></div><div class="lbl" style="left:1180px;top:434px">Show fluid drag force</div>
<svg class="abs" style="left:1306px;top:432px" width="32" height="18" viewBox="0 0 32 18"><path d="M3,9 L12.5,4.2 L12.5,7.6 L28,7.6 L28,10.4 L12.5,10.4 L12.5,13.8 Z" fill="#4dfff7" stroke="#000" stroke-width="0.9"/></svg>
<div class="cb on" style="left:1164px;top:462px"></div><div class="lbl" style="left:1181px;top:461px">Enable Brownian force</div>

<div class="sep" style="top:482px"></div>
<div class="hdr" style="left:1160px;top:486px">Graphs:</div>
<div class="cb" style="left:1164px;top:510px"></div><div class="lbl" style="left:1181px;top:509px">position histogram</div>
<svg class="abs" style="left:1291px;top:508px" width="26" height="16" viewBox="0 0 26 16"><rect x="0.5" y="0.5" width="25" height="15" fill="#fff" stroke="#999"/><path d="M3.5,15 V9 M7.5,15 V5 M12.5,15 V1.5 M17.500,15 V4 M22,15 V8" stroke="#1414e8" stroke-width="2.6"/></svg>
<div class="cb" style="left:1164px;top:537px"></div><div class="lbl" style="left:1181px;top:536px">potential energy curve</div>
<svg class="abs" style="left:1313px;top:535px" width="27" height="16" viewBox="0 0 27 16"><rect x="0.6" y="0.6" width="25.8" height="14.8" fill="#fff" stroke="#000" stroke-width="1.2"/><path d="M4,2 C8,2.5 11,6 13.500,13 C16,6 19,2.5 23,2" fill="none" stroke="#c81ec8" stroke-width="1.3"/><circle cx="13.5" cy="12.3" r="1.6" fill="#e8b020"/></svg>

<div class="sep" style="top:557px"></div>
<div class="cb" style="left:1164px;top:566px"></div><div class="lbl" style="left:1180px;top:565px">Show ruler</div>
<svg class="abs" style="left:1250px;top:564px" width="61" height="16" viewBox="0 0 61 16"><rect x="0.5" y="0.5" width="60" height="15" fill="#ecdd74" stroke="#8c8440"/><path d="M4,1 V3 M10,1 V3 M16,1 V3 M22,1 V3 M28,1 V3 M34,1 V3 M40,1 V3 M46,1 V3 M52,1 V3 M58,1 V3 M4,13 V15 M10,13 V15 M16,13 V15 M22,13 V15 M28,13 V15 M34,13 V15 M40,13 V15 M46,13 V15 M52,13 V15 M58,13 V15" stroke="#8c8440" stroke-width="0.6"/><text x="10.5" y="10.3" font-family="Liberation Sans" font-size="5.5" fill="#4a4520" text-anchor="middle">-100</text><text x="34" y="10.3" font-family="Liberation Sans" font-size="5.5" fill="#4a4520" text-anchor="middle">0 nm</text><text x="50" y="10.3" font-family="Liberation Sans" font-size="5.5" fill="#4a4520" text-anchor="middle">100</text></svg>
<div class="lbl" style="left:1160px;top:592px">bead is in:</div>
<div class="rb on" style="left:1225px;top:593px"></div><div class="lbl" style="left:1242px;top:592px">fluid</div>
<div class="rb" style="left:1276px;top:593px"></div><div class="lbl" style="left:1293px;top:592px">vacuum</div>
<div class="cb on" style="left:1164px;top:620px"></div><div class="lbl" style="left:1180px;top:619px">Show fluid controls</div>
<div class="sep" style="top:640px"></div>
<div class="btn" style="left:1228px;top:643px;width:81px;height:21px;line-height:20px;letter-spacing:0.45px">Reset All</div>
<style>
.cb.on::after{content:"";position:absolute;left:3.4px;top:0.3px;width:3px;height:6.4px;border:solid #21a121;border-width:0 2px 2px 0;transform:rotate(42deg);}
</style>
<!-- clock controls -->
<div class="tf" style="left:363px;top:1128px;width:116px;height:21px;background:#ece9d8"><span class="t" style="right:3.5px;top:4px;font-size:12.5px;letter-spacing:0.8px">9294.4E-17</span></div>
<div class="lbl" style="left:484px;top:1131px">sec</div>
<div class="btn" style="left:524px;top:1123px;width:99px;height:31px;border-radius:3px"></div>
<div class="btn" style="left:630px;top:1123px;width:93px;height:31px;border-radius:3px"></div>
<div class="btn" style="left:730px;top:1123px;width:83px;height:31px;border-radius:2px;border-color:#c9c7ba;background:#ece9d8"></div>
<svg class="abs" style="left:524px;top:1123px" width="300" height="31" viewBox="524 1123 300 31">
<path d="M551.5,1130.5 V1146 L541,1138.200 Z M560,1130.500 V1146 L549.500,1138.200 Z" fill="#7b7bc8" stroke="#333355" stroke-width="0.9"/>
<rect x="650.5" y="1130.5" width="4.6" height="15.5" fill="#a0a0de" stroke="#55557a" stroke-width="0.9"/><rect x="658.5" y="1130.5" width="4.6" height="15.5" fill="#a0a0de" stroke="#55557a" stroke-width="0.9"/>
<rect x="747.5" y="1130.5" width="4.2" height="15.5" fill="#a0a0a0" stroke="#888" stroke-width="0.9"/><path d="M753.5,1130.5 L763,1138.200 L753.5,1146 Z" fill="#a0a0a0" stroke="#888" stroke-width="0.9"/>
</svg>
<div class="lbl" style="left:567px;top:1131px">Restart</div>
<div class="lbl" style="left:673px;top:1131px">Pause</div>
<div class="lbl" style="left:772px;top:1131px;color:#aca899">Step</div>
<div class="btn" style="left:1238px;top:1129px;width:61px;height:21px;line-height:20px;letter-spacing:0.45px">Help!</div>
<!-- status bar -->
<div class="abs" style="left:4px;top:1166px;width:1380px;height:1px;background:#fff"></div>
<div class="abs" style="left:4px;top:1167px;width:1379px;height:1px;background:#716f64"></div>
<div class="abs" style="left:4px;top:1167px;width:1px;height:25px;background:#716f64"></div>
<div class="abs" style="left:4px;top:1192px;width:1380px;height:1px;background:#fff"></div>
<div class="abs" style="left:1383px;top:1167px;width:1px;height:26px;background:#fff"></div>
<div class="t" style="left:7.5px;top:1179px;font-size:11px;letter-spacing:-0.08px">Java Application Window</div>
<!-- laser controls overlay -->
<svg class="abs" style="left:466px;top:975px" width="688" height="102" viewBox="466 975 688 102">
<defs>
<linearGradient id="rb1" x1="0" y1="0" x2="1" y2="1"><stop offset="0" stop-color="#ff4a4a"/><stop offset="0.5" stop-color="#ff1010"/><stop offset="1" stop-color="#ee0000"/></linearGradient>
<linearGradient id="rb2" x1="0.15" y1="0.15" x2="0.85" y2="0.85"><stop offset="0" stop-color="#b00a0a"/><stop offset="0.45" stop-color="#e00808"/><stop offset="0.7" stop-color="#ff7070"/><stop offset="1" stop-color="#ffc8c8"/></linearGradient>
<radialGradient id="rb3" cx="522" cy="1026.500" r="26" gradientUnits="userSpaceOnUse"><stop offset="0" stop-color="#ff9a9a"/><stop offset="0.3" stop-color="#ff5a5a"/><stop offset="0.6" stop-color="#ff1c1c"/><stop offset="1" stop-color="#fb0000"/></radialGradient>
</defs>
<circle cx="522.2" cy="1026.6" r="38.2" fill="#000"/>
<circle cx="522.2" cy="1026.6" r="33.4" fill="url(#rb1)"/>
<circle cx="522.2" cy="1026.6" r="26.800" fill="none" stroke="url(#rb2)" stroke-width="2.4"/>
<circle cx="522.2" cy="1026.6" r="25.600" fill="url(#rb3)"/>
<rect x="517.4" y="1012" width="7.800" height="27.600" fill="#fff"/>
<rect x="669.5" y="1002.5" width="222" height="49" fill="url(#pw)" stroke="#d8d8d8" stroke-width="1.2"/>
<rect x="686" y="1023.5" width="184" height="6" rx="2" fill="#efefe6" stroke="#bbb" stroke-width="0.6"/>
<rect x="865" y="1011.5" width="14" height="30" rx="2" fill="#f2f2ea" stroke="#8a8a80" stroke-width="1"/>
<path d="M866.5,1013 H877.5 M866.5,1040 H877.5" stroke="#21a121" stroke-width="2"/>
<rect x="901.500" y="1009.5" width="90" height="34.5" fill="#fff" stroke="#9fb5d0" stroke-width="1.5"/>
<rect x="1064.500" y="997.5" width="81" height="57" fill="#fff" stroke="#000" stroke-width="1"/>
<rect x="1065" y="998" width="80" height="32.300" fill="#000"/>
<ellipse cx="1105" cy="1013.500" rx="36" ry="11.500" fill="#f01010" stroke="#fff" stroke-width="1.5"/>
<text x="1105" y="1018.5" text-anchor="middle" font-family="Liberation Sans" font-weight="bold" font-size="13.5" fill="#fff" letter-spacing="0.2">DANGER</text>
<text x="1140" y="1041.300" text-anchor="end" font-family="Liberation Sans" font-weight="bold" font-size="11" fill="#000">LASER</text>
<text x="1140" y="1052.300" text-anchor="end" font-family="Liberation Sans" font-weight="bold" font-size="11" fill="#000">LIGHT</text>
<g transform="translate(1078.500,1042)"><circle r="4.3" fill="#000"/><path d="M-7,0 H7 M0,-7 V7 M-5,-5 L5,5 M-5,5 L5,-5 M-6.5,-2.700 L6.5,2.700 M-2.700,-6.5 L2.700,6.5 M-6.5,2.700 L6.5,-2.700 M2.700,-6.5 L-2.700,6.5" stroke="#000" stroke-width="1.300"/><path d="M0,0 H19" stroke="#000" stroke-width="1.6"/></g>
</svg>
<div class="t" style="left:589px;top:1016px;font-size:22px;color:#dcdcdc;letter-spacing:0.3px">Power:</div>
<div class="t" style="left:927.5px;top:1016px;width:58px;text-align:right;font-size:23px;color:#222;letter-spacing:0.5px">990</div>
<div class="t" style="left:996px;top:1016px;font-size:22px;color:#dcdcdc;letter-spacing:0.3px">mW</div>
<!-- fluid dialog -->
<div class="abs" style="left:68px;top:819px;width:219px;height:281px;box-sizing:border-box;background:#7a8fe0;border-radius:7px 7px 0 0;border:1px solid #6a7fd8"></div>
<div class="abs" style="left:69px;top:820px;width:217px;height:28px;border-radius:6px 6px 0 0;background:linear-gradient(to bottom,#7f9be6 0%,#7b93e0 30%,#7a90dc 60%,#86a4ea 100%)"></div>
<div class="abs" style="left:72px;top:848px;width:211px;height:248px;background:#ece9d8"></div>
<div class="t" style="left:75px;top:828px;font-size:13px;font-weight:bold;color:#d8e0f8;letter-spacing:0.1px">Fluid</div>
<div class="abs" style="left:261.5px;top:824.5px;width:20.5px;height:20.5px;box-sizing:border-box;border:1px solid #e8e0f0;border-radius:3px;background:radial-gradient(circle at 30% 25%,#c890a8 0%,#b86080 50%,#a84868 100%)"></div>
<svg class="abs" style="left:262px;top:825px" width="20" height="20" viewBox="0 0 20 20"><path d="M5.500,5.500 L14.500,14.500 M14.500,5.500 L5.500,14.500" stroke="#fff" stroke-width="2.1"/></svg>
<div class="lbl" style="left:77px;top:854px;letter-spacing:0.35px">Flow speed:</div>
<div class="tf" style="left:150px;top:851px;width:50px;height:21px"><span class="t" style="right:5px;top:4px;font-size:12.5px;letter-spacing:0.6px">953</span></div>
<div class="lbl" style="left:204px;top:854px">microns/sec</div>
<div class="lbl" style="left:77px;top:930px;letter-spacing:0.2px">Fluid viscosity:</div>
<div class="tf" style="left:163px;top:927px;width:61px;height:21px"><span class="t" style="right:5px;top:4px;font-size:12.5px;letter-spacing:0.5px">1.4E-3</span></div>
<div class="lbl" style="left:228px;top:930px">Pa*sec</div>
<div class="lbl" style="left:77px;top:1006px">Fluid temperature:</div>
<div class="tf" style="left:188px;top:1003px;width:39px;height:21px"><span class="t" style="right:5px;top:4px;font-size:12.5px;letter-spacing:0.6px">298</span></div>
<div class="lbl" style="left:231px;top:1006px">K</div>
<svg class="abs" style="left:72px;top:872px" width="211" height="210" viewBox="72 872 211 210">
<defs><linearGradient id="kg" x1="0" y1="0" x2="1" y2="0"><stop offset="0" stop-color="#fff"/><stop offset="0.55" stop-color="#ecebe4"/><stop offset="1" stop-color="#c4c3b8"/></linearGradient></defs>
<g fill="none">
<rect x="93" y="883.5" width="168" height="4" rx="2" fill="#f6f5ee" stroke="#b4b2a4" stroke-width="0.8"/>
<rect x="92" y="959.5" width="170" height="4" rx="2" fill="#f6f5ee" stroke="#b4b2a4" stroke-width="0.8"/>
<rect x="89" y="1035.5" width="176" height="4" rx="2" fill="#f6f5ee" stroke="#b4b2a4" stroke-width="0.8"/>
<path d="M93.500,896 V903 M178.500,896 V903 M262.500,896 V903 M110.500,896 V900 M127.500,896 V900 M144.500,896 V900 M161.500,896 V900 M195.500,896 V900 M212.500,896 V900 M229.500,896 V900 M245.500,896 V900" stroke="#8c8a7c" stroke-width="1"/>
<path d="M92.500,972 V979 M262.500,972 V979" stroke="#8c8a7c" stroke-width="1"/>
<path d="M89.500,1048 V1055 M178.500,1048 V1055 M265.500,1048 V1055 M118.500,1048 V1052 M148.500,1048 V1052 M207.500,1048 V1052 M236.500,1048 V1052" stroke="#8c8a7c" stroke-width="1"/>
</g>
<g id="knob1"><path d="M249.500,876.500 H259.500 V889.500 L254.500,894.500 L249.500,889.500 Z" fill="url(#kg)" stroke="#8a8a80" stroke-width="1"/><path d="M250,877.300 H259" stroke="#21a121" stroke-width="2.2"/><path d="M250,890.500 L254.500,895 L259,890.500" stroke="#21a121" stroke-width="1.2" fill="none"/></g>
<g transform="translate(-104,76)"><path d="M249.500,876.500 H259.500 V889.500 L254.500,894.500 L249.500,889.500 Z" fill="url(#kg)" stroke="#8a8a80" stroke-width="1"/><path d="M250,877.300 H259" stroke="#21a121" stroke-width="2.2"/><path d="M250,890.500 L254.500,895 L259,890.500" stroke="#21a121" stroke-width="1.2" fill="none"/></g>
<g transform="translate(-19,152)"><path d="M249.500,876.500 H259.500 V889.500 L254.500,894.500 L249.500,889.500 Z" fill="url(#kg)" stroke="#8a8a80" stroke-width="1"/><path d="M250,877.300 H259" stroke="#21a121" stroke-width="2.2"/><path d="M250,890.500 L254.500,895 L259,890.500" stroke="#21a121" stroke-width="1.2" fill="none"/></g>
</svg>
<div class="lbl" style="left:89px;top:904px;letter-spacing:1px">0</div>
<div class="lbl" style="left:166px;top:904px;letter-spacing:1px">500</div>
<div class="lbl" style="left:246px;top:904px;letter-spacing:1px">1000</div>
<div class="lbl" style="left:77px;top:980px;letter-spacing:1px">5E-4</div>
<div class="lbl" style="left:248px;top:980px;letter-spacing:1px">1E-2</div>
<div class="lbl" style="left:81px;top:1056px;letter-spacing:1px">50</div>
<div class="lbl" style="left:166px;top:1056px;letter-spacing:1px">200</div>
<div class="lbl" style="left:253px;top:1056px;letter-spacing:1px">350</div>
<div class="abs" style="left:73px;top:923px;width:209px;height:1px;background:#aca899;border-bottom:1px solid #fff"></div>
<div class="abs" style="left:73px;top:999px;width:209px;height:1px;background:#aca899;border-bottom:1px solid #fff"></div>
<div class="t" style="left:72px;top:1084px;font-size:11px;letter-spacing:-0.08px">Java Application Window</div>
</div></body></html>
